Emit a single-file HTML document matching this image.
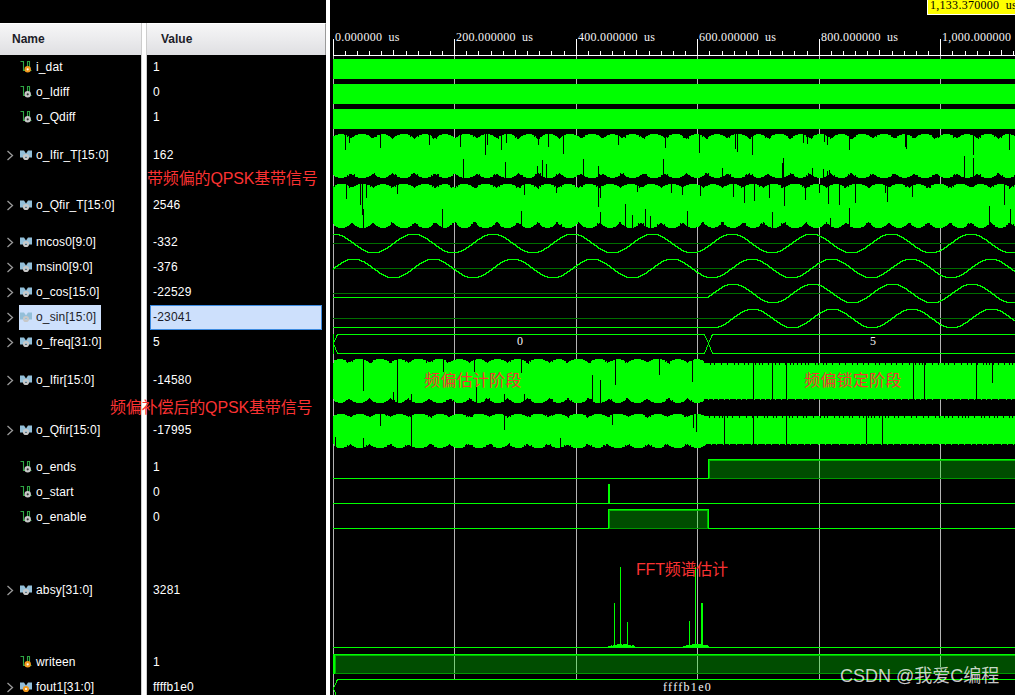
<!DOCTYPE html><html><head><meta charset="utf-8"><title>wave</title><style>
html,body{margin:0;padding:0;background:#000;}
body{width:1015px;height:695px;overflow:hidden;position:relative;font-family:"Liberation Sans","Noto Sans CJK SC",sans-serif;font-size:12px;color:#fff;}
.abs{position:absolute;}
.hdr{position:absolute;top:23px;height:32px;background:linear-gradient(#f6f6f7,#ececee 45%,#dfdfe2);box-sizing:border-box;border-top:1px solid #fff;color:#1c1c28;font-weight:bold;line-height:31px;}
.div{position:absolute;top:23px;bottom:0;background:#fff;}
.row{position:absolute;left:0;white-space:nowrap;}
.nm{position:absolute;left:36px;letter-spacing:0.14px;}
.val{position:absolute;left:153px;letter-spacing:0.2px;}
.red{position:absolute;color:#fa3232;font-size:16px;line-height:20px;letter-spacing:-0.15px;white-space:nowrap;font-family:"Liberation Sans","Noto Sans CJK SC",sans-serif;}
.mono{position:absolute;font-family:"Liberation Serif",serif;font-size:12px;line-height:12px;white-space:pre;word-spacing:3px;letter-spacing:0.28px;color:#f4f4f4;}
.ic{position:absolute;}
</style></head><body>
<svg width="1015" height="695" viewBox="0 0 1015 695" shape-rendering="crispEdges" style="position:absolute;left:0;top:0"><rect x="333" y="39" width="1" height="656" fill="#b4b4b4"/>
<rect x="454" y="39" width="1" height="640" fill="#b4b4b4"/>
<rect x="576" y="39" width="1" height="640" fill="#b4b4b4"/>
<rect x="697" y="39" width="1" height="640" fill="#b4b4b4"/>
<rect x="819" y="39" width="1" height="640" fill="#b4b4b4"/>
<rect x="940" y="39" width="1" height="628" fill="#b4b4b4"/>
<rect x="333" y="55" width="682" height="1" fill="#fff"/>
<rect x="333" y="39" width="1" height="17" fill="#fff"/>
<rect x="454" y="39" width="1" height="17" fill="#fff"/>
<rect x="576" y="39" width="1" height="17" fill="#fff"/>
<rect x="697" y="39" width="1" height="17" fill="#fff"/>
<rect x="819" y="39" width="1" height="17" fill="#fff"/>
<rect x="940" y="39" width="1" height="17" fill="#fff"/>
<rect x="345" y="51" width="1" height="5" fill="#fff"/>
<rect x="357" y="51" width="1" height="5" fill="#fff"/>
<rect x="369" y="51" width="1" height="5" fill="#fff"/>
<rect x="381" y="51" width="1" height="5" fill="#fff"/>
<rect x="393" y="50" width="1" height="6" fill="#fff"/>
<rect x="406" y="51" width="1" height="5" fill="#fff"/>
<rect x="418" y="51" width="1" height="5" fill="#fff"/>
<rect x="430" y="51" width="1" height="5" fill="#fff"/>
<rect x="442" y="51" width="1" height="5" fill="#fff"/>
<rect x="466" y="51" width="1" height="5" fill="#fff"/>
<rect x="478" y="51" width="1" height="5" fill="#fff"/>
<rect x="491" y="51" width="1" height="5" fill="#fff"/>
<rect x="503" y="51" width="1" height="5" fill="#fff"/>
<rect x="515" y="50" width="1" height="6" fill="#fff"/>
<rect x="527" y="51" width="1" height="5" fill="#fff"/>
<rect x="539" y="51" width="1" height="5" fill="#fff"/>
<rect x="551" y="51" width="1" height="5" fill="#fff"/>
<rect x="564" y="51" width="1" height="5" fill="#fff"/>
<rect x="588" y="51" width="1" height="5" fill="#fff"/>
<rect x="600" y="51" width="1" height="5" fill="#fff"/>
<rect x="612" y="51" width="1" height="5" fill="#fff"/>
<rect x="624" y="51" width="1" height="5" fill="#fff"/>
<rect x="636" y="50" width="1" height="6" fill="#fff"/>
<rect x="649" y="51" width="1" height="5" fill="#fff"/>
<rect x="661" y="51" width="1" height="5" fill="#fff"/>
<rect x="673" y="51" width="1" height="5" fill="#fff"/>
<rect x="685" y="51" width="1" height="5" fill="#fff"/>
<rect x="709" y="51" width="1" height="5" fill="#fff"/>
<rect x="722" y="51" width="1" height="5" fill="#fff"/>
<rect x="734" y="51" width="1" height="5" fill="#fff"/>
<rect x="746" y="51" width="1" height="5" fill="#fff"/>
<rect x="758" y="50" width="1" height="6" fill="#fff"/>
<rect x="770" y="51" width="1" height="5" fill="#fff"/>
<rect x="782" y="51" width="1" height="5" fill="#fff"/>
<rect x="794" y="51" width="1" height="5" fill="#fff"/>
<rect x="807" y="51" width="1" height="5" fill="#fff"/>
<rect x="831" y="51" width="1" height="5" fill="#fff"/>
<rect x="843" y="51" width="1" height="5" fill="#fff"/>
<rect x="855" y="51" width="1" height="5" fill="#fff"/>
<rect x="867" y="51" width="1" height="5" fill="#fff"/>
<rect x="879" y="50" width="1" height="6" fill="#fff"/>
<rect x="892" y="51" width="1" height="5" fill="#fff"/>
<rect x="904" y="51" width="1" height="5" fill="#fff"/>
<rect x="916" y="51" width="1" height="5" fill="#fff"/>
<rect x="928" y="51" width="1" height="5" fill="#fff"/>
<rect x="952" y="51" width="1" height="5" fill="#fff"/>
<rect x="965" y="51" width="1" height="5" fill="#fff"/>
<rect x="977" y="51" width="1" height="5" fill="#fff"/>
<rect x="989" y="51" width="1" height="5" fill="#fff"/>
<rect x="1001" y="50" width="1" height="6" fill="#fff"/>
<rect x="1013" y="51" width="1" height="5" fill="#fff"/>
<rect x="333" y="59" width="682" height="20" fill="#00ff00"/>
<rect x="333" y="84" width="682" height="20" fill="#00ff00"/>
<rect x="333" y="109" width="682" height="20" fill="#00ff00"/>
<path d="M333 136 L335 136 L335 135 L338 135 L338 134 L344 134 L344 135 L347 135 L347 137 L348 137 L348 136 L349 136 L349 137 L350 137 L350 138 L352 138 L352 137 L354 137 L354 136 L355 136 L355 135 L358 135 L358 134 L366 134 L366 135 L369 135 L369 136 L370 136 L370 137 L371 137 L371 138 L374 138 L374 137 L377 137 L377 135 L380 135 L380 134 L386 134 L386 135 L388 135 L388 136 L390 136 L390 137 L391 137 L391 138 L392 138 L392 139 L393 139 L393 138 L394 138 L394 137 L395 137 L395 136 L397 136 L397 135 L400 135 L400 134 L408 134 L408 135 L410 135 L410 137 L411 137 L411 136 L412 136 L412 137 L413 137 L413 138 L414 138 L414 139 L415 139 L415 138 L416 138 L416 137 L417 137 L417 136 L418 136 L418 137 L419 137 L419 135 L422 135 L422 134 L428 134 L428 135 L431 135 L431 136 L432 136 L432 138 L433 138 L433 139 L434 139 L434 138 L436 138 L436 139 L437 139 L437 137 L438 137 L438 136 L439 136 L439 135 L442 135 L442 134 L448 134 L448 135 L451 135 L451 136 L453 136 L453 137 L454 137 L454 138 L456 138 L456 137 L458 137 L458 136 L459 136 L459 135 L462 135 L462 134 L470 134 L470 135 L473 135 L473 137 L474 137 L474 136 L475 136 L475 137 L476 137 L476 138 L478 138 L478 137 L480 137 L480 136 L481 136 L481 135 L484 135 L484 134 L490 134 L490 135 L493 135 L493 136 L494 136 L494 137 L496 137 L496 138 L498 138 L498 139 L499 139 L499 136 L501 136 L501 135 L504 135 L504 134 L512 134 L512 135 L514 135 L514 136 L515 136 L515 138 L516 138 L516 137 L517 137 L517 139 L519 139 L519 138 L520 138 L520 137 L521 137 L521 136 L523 136 L523 135 L526 135 L526 134 L532 134 L532 135 L534 135 L534 137 L535 137 L535 136 L536 136 L536 138 L537 138 L537 139 L540 139 L540 137 L542 137 L542 136 L543 136 L543 135 L545 135 L545 134 L553 134 L553 135 L555 135 L555 136 L557 136 L557 137 L558 137 L558 138 L559 138 L559 139 L560 139 L560 138 L561 138 L561 137 L562 137 L562 136 L564 136 L564 135 L566 135 L566 134 L574 134 L574 135 L577 135 L577 136 L579 136 L579 137 L580 137 L580 138 L583 138 L583 137 L585 137 L585 135 L588 135 L588 134 L596 134 L596 135 L599 135 L599 136 L600 136 L600 137 L601 137 L601 138 L604 138 L604 137 L606 137 L606 136 L607 136 L607 135 L610 135 L610 134 L615 134 L615 135 L618 135 L618 136 L620 136 L620 137 L621 137 L621 138 L623 138 L623 137 L625 137 L625 138 L626 138 L626 135 L629 135 L629 134 L636 134 L636 135 L639 135 L639 137 L640 137 L640 136 L641 136 L641 137 L642 137 L642 138 L644 138 L644 139 L645 139 L645 137 L646 137 L646 136 L648 136 L648 135 L650 135 L650 134 L658 134 L658 135 L661 135 L661 136 L663 136 L663 137 L664 137 L664 138 L666 138 L666 137 L667 137 L667 138 L668 138 L668 137 L669 137 L669 135 L672 135 L672 134 L680 134 L680 135 L682 135 L682 136 L683 136 L683 138 L686 138 L686 139 L687 139 L687 138 L688 138 L688 139 L689 139 L689 136 L691 136 L691 135 L694 135 L694 134 L700 134 L700 135 L702 135 L702 137 L703 137 L703 136 L704 136 L704 137 L705 137 L705 138 L706 138 L706 139 L708 139 L708 137 L709 137 L709 136 L711 136 L711 135 L714 135 L714 134 L720 134 L720 135 L723 135 L723 136 L725 136 L725 137 L726 137 L726 138 L728 138 L728 137 L729 137 L729 138 L730 138 L730 136 L731 136 L731 135 L734 135 L734 134 L742 134 L742 135 L745 135 L745 136 L747 136 L747 137 L748 137 L748 138 L749 138 L749 139 L751 139 L751 137 L752 137 L752 136 L754 136 L754 135 L756 135 L756 134 L761 134 L761 135 L764 135 L764 136 L765 136 L765 138 L766 138 L766 137 L767 137 L767 138 L769 138 L769 139 L770 139 L770 138 L771 138 L771 136 L772 136 L772 135 L775 135 L775 134 L784 134 L784 135 L786 135 L786 136 L788 136 L788 138 L789 138 L789 139 L791 139 L791 138 L793 138 L793 136 L795 136 L795 135 L798 135 L798 134 L803 134 L803 135 L806 135 L806 137 L807 137 L807 136 L808 136 L808 137 L809 137 L809 138 L811 138 L811 139 L812 139 L812 138 L813 138 L813 136 L814 136 L814 135 L817 135 L817 134 L824 134 L824 135 L826 135 L826 136 L828 136 L828 137 L830 137 L830 139 L831 139 L831 138 L833 138 L833 137 L834 137 L834 136 L835 136 L835 135 L838 135 L838 134 L845 134 L845 135 L847 135 L847 136 L849 136 L849 137 L850 137 L850 139 L853 139 L853 138 L854 138 L854 137 L856 137 L856 135 L858 135 L858 134 L866 134 L866 135 L869 135 L869 136 L870 136 L870 137 L872 137 L872 138 L874 138 L874 137 L875 137 L875 136 L876 136 L876 137 L877 137 L877 135 L880 135 L880 134 L888 134 L888 135 L891 135 L891 137 L893 137 L893 138 L897 138 L897 136 L899 136 L899 135 L902 135 L902 134 L907 134 L907 135 L910 135 L910 136 L912 136 L912 138 L916 138 L916 137 L917 137 L917 136 L918 136 L918 135 L921 135 L921 134 L929 134 L929 135 L932 135 L932 137 L933 137 L933 138 L934 138 L934 139 L935 139 L935 138 L937 138 L937 137 L938 137 L938 138 L939 138 L939 137 L940 137 L940 135 L943 135 L943 134 L950 134 L950 135 L953 135 L953 138 L954 138 L954 137 L956 137 L956 138 L958 138 L958 137 L960 137 L960 136 L961 136 L961 135 L964 135 L964 134 L970 134 L970 135 L973 135 L973 136 L975 136 L975 137 L976 137 L976 138 L978 138 L978 139 L979 139 L979 137 L980 137 L980 138 L981 138 L981 135 L984 135 L984 134 L992 134 L992 135 L994 135 L994 137 L995 137 L995 136 L996 136 L996 137 L997 137 L997 138 L998 138 L998 139 L999 139 L999 138 L1000 138 L1000 137 L1001 137 L1001 138 L1002 138 L1002 136 L1003 136 L1003 135 L1005 135 L1005 134 L1011 134 L1011 135 L1014 135 L1014 136 L1016 136 L1016 176 L1015 176 L1015 175 L1014 175 L1014 177 L1011 177 L1011 178 L1005 178 L1005 177 L1003 177 L1003 175 L1002 175 L1002 176 L1001 176 L1001 175 L1000 175 L1000 174 L999 174 L999 173 L997 173 L997 175 L996 175 L996 176 L994 176 L994 177 L992 177 L992 178 L984 178 L984 177 L981 177 L981 174 L980 174 L980 175 L978 175 L978 174 L976 174 L976 175 L975 175 L975 176 L974 176 L974 175 L973 175 L973 177 L970 177 L970 178 L964 178 L964 177 L961 177 L961 176 L960 176 L960 175 L958 175 L958 174 L956 174 L956 175 L955 175 L955 174 L954 174 L954 175 L953 175 L953 177 L950 177 L950 178 L943 178 L943 177 L940 177 L940 176 L939 176 L939 175 L938 175 L938 174 L935 174 L935 175 L932 175 L932 177 L929 177 L929 178 L921 178 L921 177 L918 177 L918 175 L915 175 L915 174 L913 174 L913 175 L912 175 L912 176 L910 176 L910 177 L907 177 L907 178 L902 178 L902 177 L899 177 L899 176 L898 176 L898 175 L896 175 L896 174 L892 174 L892 176 L891 176 L891 177 L888 177 L888 178 L880 178 L880 177 L877 177 L877 176 L876 176 L876 175 L874 175 L874 174 L872 174 L872 175 L871 175 L871 174 L870 174 L870 176 L869 176 L869 177 L866 177 L866 178 L858 178 L858 177 L856 177 L856 175 L855 175 L855 176 L854 176 L854 175 L853 175 L853 174 L852 174 L852 173 L850 173 L850 175 L849 175 L849 174 L848 174 L848 176 L847 176 L847 177 L845 177 L845 178 L838 178 L838 177 L835 177 L835 175 L834 175 L834 176 L833 176 L833 175 L832 175 L832 174 L831 174 L831 173 L830 173 L830 175 L828 175 L828 176 L826 176 L826 177 L824 177 L824 178 L817 178 L817 177 L814 177 L814 176 L813 176 L813 174 L812 174 L812 175 L811 175 L811 174 L809 174 L809 173 L808 173 L808 176 L807 176 L807 175 L806 175 L806 177 L803 177 L803 178 L798 178 L798 177 L795 177 L795 176 L794 176 L794 174 L791 174 L791 173 L790 173 L790 175 L788 175 L788 176 L786 176 L786 177 L784 177 L784 178 L775 178 L775 177 L772 177 L772 176 L770 176 L770 175 L769 175 L769 174 L767 174 L767 175 L765 175 L765 176 L764 176 L764 177 L761 177 L761 178 L756 178 L756 177 L754 177 L754 176 L753 176 L753 174 L752 174 L752 175 L750 175 L750 173 L749 173 L749 174 L748 174 L748 175 L747 175 L747 174 L746 174 L746 175 L745 175 L745 177 L742 177 L742 178 L734 178 L734 177 L731 177 L731 174 L730 174 L730 175 L729 175 L729 174 L726 174 L726 175 L725 175 L725 176 L723 176 L723 177 L720 177 L720 178 L714 178 L714 177 L711 177 L711 176 L709 176 L709 173 L708 173 L708 174 L707 174 L707 173 L705 173 L705 175 L704 175 L704 176 L702 176 L702 177 L700 177 L700 178 L694 178 L694 177 L691 177 L691 176 L690 176 L690 175 L688 175 L688 174 L687 174 L687 173 L686 173 L686 174 L685 174 L685 175 L684 175 L684 176 L682 176 L682 177 L680 177 L680 178 L672 178 L672 177 L669 177 L669 176 L668 176 L668 174 L667 174 L667 175 L666 175 L666 174 L664 174 L664 175 L661 175 L661 177 L658 177 L658 178 L650 178 L650 177 L648 177 L648 176 L647 176 L647 174 L642 174 L642 175 L640 175 L640 176 L639 176 L639 177 L636 177 L636 178 L629 178 L629 177 L626 177 L626 176 L625 176 L625 175 L624 175 L624 173 L623 173 L623 174 L621 174 L621 173 L620 173 L620 176 L618 176 L618 177 L615 177 L615 178 L610 178 L610 177 L607 177 L607 176 L606 176 L606 175 L604 175 L604 174 L602 174 L602 175 L600 175 L600 174 L599 174 L599 177 L596 177 L596 178 L588 178 L588 177 L585 177 L585 176 L584 176 L584 175 L582 175 L582 174 L580 174 L580 175 L577 175 L577 177 L574 177 L574 178 L566 178 L566 177 L564 177 L564 176 L563 176 L563 175 L561 175 L561 174 L560 174 L560 173 L559 173 L559 174 L558 174 L558 175 L557 175 L557 174 L556 174 L556 176 L555 176 L555 177 L553 177 L553 178 L545 178 L545 177 L543 177 L543 176 L541 176 L541 173 L540 173 L540 174 L539 174 L539 173 L537 173 L537 174 L535 174 L535 176 L534 176 L534 177 L532 177 L532 178 L526 178 L526 177 L523 177 L523 175 L520 175 L520 174 L519 174 L519 173 L518 173 L518 174 L517 174 L517 175 L516 175 L516 176 L514 176 L514 177 L512 177 L512 178 L504 178 L504 177 L501 177 L501 176 L499 176 L499 175 L498 175 L498 174 L496 174 L496 175 L495 175 L495 174 L494 174 L494 175 L493 175 L493 177 L490 177 L490 178 L484 178 L484 177 L481 177 L481 176 L480 176 L480 174 L479 174 L479 175 L478 175 L478 174 L476 174 L476 175 L475 175 L475 176 L473 176 L473 177 L470 177 L470 178 L462 178 L462 177 L459 177 L459 176 L458 176 L458 175 L456 175 L456 174 L453 174 L453 176 L451 176 L451 177 L448 177 L448 178 L442 178 L442 177 L439 177 L439 174 L437 174 L437 175 L436 175 L436 174 L433 174 L433 176 L432 176 L432 175 L431 175 L431 177 L428 177 L428 178 L422 178 L422 177 L419 177 L419 176 L418 176 L418 174 L417 174 L417 175 L416 175 L416 174 L415 174 L415 173 L413 173 L413 174 L411 174 L411 176 L410 176 L410 177 L408 177 L408 178 L400 178 L400 177 L397 177 L397 175 L396 175 L396 174 L395 174 L395 175 L394 175 L394 174 L393 174 L393 173 L392 173 L392 174 L391 174 L391 175 L389 175 L389 176 L388 176 L388 177 L386 177 L386 178 L380 178 L380 177 L377 177 L377 176 L376 176 L376 175 L375 175 L375 173 L374 173 L374 174 L372 174 L372 175 L371 175 L371 176 L369 176 L369 177 L366 177 L366 178 L358 178 L358 177 L355 177 L355 174 L354 174 L354 175 L352 175 L352 174 L349 174 L349 176 L348 176 L348 175 L347 175 L347 177 L344 177 L344 178 L338 178 L338 177 L335 177 L335 176 L334 176 L334 175 L333 175Z" fill="#00ff00"/>
<rect x="345" y="134" width="1" height="16" fill="#000"/><rect x="349" y="134" width="1" height="9" fill="#000"/><rect x="380" y="134" width="1" height="14" fill="#000"/><rect x="429" y="134" width="1" height="11" fill="#000"/><rect x="460" y="134" width="1" height="13" fill="#000"/><rect x="485" y="134" width="1" height="21" fill="#000"/><rect x="487" y="134" width="1" height="11" fill="#000"/><rect x="501" y="134" width="1" height="16" fill="#000"/><rect x="506" y="134" width="1" height="9" fill="#000"/><rect x="538" y="134" width="1" height="11" fill="#000"/><rect x="548" y="134" width="1" height="13" fill="#000"/><rect x="563" y="134" width="1" height="20" fill="#000"/><rect x="618" y="134" width="1" height="11" fill="#000"/><rect x="665" y="134" width="1" height="14" fill="#000"/><rect x="905" y="134" width="1" height="13" fill="#000"/><rect x="737" y="134" width="1" height="18" fill="#000"/><rect x="973" y="134" width="1" height="21" fill="#000"/><rect x="699" y="134" width="1" height="19" fill="#000"/><rect x="1009" y="134" width="1" height="16" fill="#000"/><rect x="807" y="134" width="1" height="10" fill="#000"/><rect x="906" y="134" width="1" height="15" fill="#000"/><rect x="735" y="134" width="1" height="15" fill="#000"/><rect x="803" y="134" width="1" height="9" fill="#000"/><rect x="752" y="134" width="1" height="21" fill="#000"/><rect x="827" y="134" width="1" height="11" fill="#000"/><rect x="824" y="134" width="1" height="8" fill="#000"/><rect x="849" y="134" width="1" height="16" fill="#000"/><rect x="463" y="159" width="1" height="19" fill="#000"/><rect x="505" y="162" width="1" height="16" fill="#000"/><rect x="537" y="166" width="1" height="12" fill="#000"/><rect x="542" y="160" width="1" height="18" fill="#000"/><rect x="546" y="164" width="1" height="14" fill="#000"/><rect x="583" y="159" width="1" height="19" fill="#000"/><rect x="598" y="166" width="1" height="12" fill="#000"/><rect x="663" y="159" width="1" height="19" fill="#000"/><rect x="722" y="168" width="1" height="10" fill="#000"/><rect x="829" y="170" width="1" height="8" fill="#000"/><rect x="782" y="163" width="1" height="15" fill="#000"/><rect x="964" y="156" width="1" height="22" fill="#000"/><rect x="783" y="158" width="1" height="20" fill="#000"/><rect x="827" y="171" width="1" height="7" fill="#000"/><rect x="823" y="169" width="1" height="9" fill="#000"/><rect x="973" y="158" width="1" height="20" fill="#000"/><rect x="812" y="168" width="1" height="10" fill="#000"/>
<path d="M333 186 L334 186 L334 187 L335 187 L335 185 L337 185 L337 184 L346 184 L346 185 L348 185 L348 186 L349 186 L349 188 L350 188 L350 187 L354 187 L354 186 L356 186 L356 185 L358 185 L358 184 L367 184 L367 185 L370 185 L370 187 L371 187 L371 186 L372 186 L372 187 L373 187 L373 188 L374 188 L374 187 L375 187 L375 186 L377 186 L377 185 L380 185 L380 184 L386 184 L386 185 L389 185 L389 186 L391 186 L391 188 L392 188 L392 187 L394 187 L394 186 L395 186 L395 187 L396 187 L396 185 L399 185 L399 184 L408 184 L408 185 L411 185 L411 186 L413 186 L413 187 L414 187 L414 188 L415 188 L415 187 L416 187 L416 186 L418 186 L418 185 L421 185 L421 184 L429 184 L429 185 L432 185 L432 187 L433 187 L433 186 L434 186 L434 188 L436 188 L436 187 L437 187 L437 186 L438 186 L438 187 L439 187 L439 185 L442 185 L442 184 L448 184 L448 185 L450 185 L450 187 L451 187 L451 188 L452 188 L452 187 L455 187 L455 188 L456 188 L456 186 L457 186 L457 187 L458 187 L458 185 L460 185 L460 184 L468 184 L468 185 L471 185 L471 186 L472 186 L472 187 L474 187 L474 188 L477 188 L477 187 L478 187 L478 185 L481 185 L481 184 L490 184 L490 185 L493 185 L493 187 L494 187 L494 186 L495 186 L495 187 L496 187 L496 188 L497 188 L497 187 L498 187 L498 186 L499 186 L499 187 L500 187 L500 185 L503 185 L503 184 L512 184 L512 185 L515 185 L515 186 L516 186 L516 188 L517 188 L517 187 L519 187 L519 188 L521 188 L521 186 L522 186 L522 185 L525 185 L525 184 L531 184 L531 185 L534 185 L534 187 L535 187 L535 186 L536 186 L536 187 L537 187 L537 188 L538 188 L538 189 L539 189 L539 186 L540 186 L540 187 L541 187 L541 185 L544 185 L544 184 L551 184 L551 185 L554 185 L554 187 L555 187 L555 186 L556 186 L556 188 L558 188 L558 187 L560 187 L560 186 L561 186 L561 187 L562 187 L562 185 L564 185 L564 184 L572 184 L572 185 L575 185 L575 187 L578 187 L578 188 L579 188 L579 187 L580 187 L580 186 L581 186 L581 187 L583 187 L583 185 L585 185 L585 184 L593 184 L593 185 L596 185 L596 187 L597 187 L597 186 L598 186 L598 188 L600 188 L600 187 L601 187 L601 186 L604 186 L604 185 L606 185 L606 184 L614 184 L614 185 L617 185 L617 186 L619 186 L619 187 L620 187 L620 188 L621 188 L621 187 L622 187 L622 186 L624 186 L624 185 L627 185 L627 184 L635 184 L635 185 L637 185 L637 187 L638 187 L638 186 L639 186 L639 188 L640 188 L640 187 L644 187 L644 186 L645 186 L645 185 L647 185 L647 184 L655 184 L655 185 L658 185 L658 186 L660 186 L660 187 L661 187 L661 188 L662 188 L662 187 L663 187 L663 186 L665 186 L665 185 L668 185 L668 184 L676 184 L676 185 L679 185 L679 186 L681 186 L681 187 L682 187 L682 188 L683 188 L683 187 L684 187 L684 186 L686 186 L686 185 L689 185 L689 184 L697 184 L697 185 L700 185 L700 186 L702 186 L702 187 L703 187 L703 188 L704 188 L704 187 L705 187 L705 186 L708 186 L708 185 L710 185 L710 184 L716 184 L716 185 L719 185 L719 186 L721 186 L721 187 L722 187 L722 188 L723 188 L723 187 L724 187 L724 186 L727 186 L727 185 L729 185 L729 184 L737 184 L737 185 L739 185 L739 186 L741 186 L741 188 L742 188 L742 187 L744 187 L744 188 L745 188 L745 186 L746 186 L746 185 L749 185 L749 184 L757 184 L757 185 L759 185 L759 187 L760 187 L760 186 L762 186 L762 187 L763 187 L763 188 L764 188 L764 187 L765 187 L765 186 L767 186 L767 185 L770 185 L770 184 L778 184 L778 185 L781 185 L781 188 L783 188 L783 187 L786 187 L786 186 L788 186 L788 185 L790 185 L790 184 L800 184 L800 185 L802 185 L802 187 L803 187 L803 186 L804 186 L804 188 L805 188 L805 187 L806 187 L806 188 L807 188 L807 187 L810 187 L810 185 L813 185 L813 184 L820 184 L820 185 L823 185 L823 186 L825 186 L825 187 L826 187 L826 188 L827 188 L827 187 L828 187 L828 186 L830 186 L830 185 L833 185 L833 184 L839 184 L839 185 L842 185 L842 186 L844 186 L844 188 L846 188 L846 187 L847 187 L847 186 L848 186 L848 187 L849 187 L849 185 L852 185 L852 184 L862 184 L862 185 L865 185 L865 186 L867 186 L867 187 L868 187 L868 188 L870 188 L870 187 L871 187 L871 186 L872 186 L872 185 L875 185 L875 184 L883 184 L883 185 L885 185 L885 186 L887 186 L887 188 L888 188 L888 187 L891 187 L891 186 L892 186 L892 185 L895 185 L895 184 L903 184 L903 185 L905 185 L905 187 L907 187 L907 186 L908 186 L908 187 L909 187 L909 188 L910 188 L910 187 L911 187 L911 186 L913 186 L913 185 L916 185 L916 184 L921 184 L921 185 L924 185 L924 186 L926 186 L926 188 L928 188 L928 187 L929 187 L929 188 L931 188 L931 185 L934 185 L934 184 L944 184 L944 185 L946 185 L946 186 L948 186 L948 188 L949 188 L949 187 L951 187 L951 188 L952 188 L952 186 L953 186 L953 187 L954 187 L954 185 L956 185 L956 184 L965 184 L965 185 L967 185 L967 186 L969 186 L969 187 L974 187 L974 186 L975 186 L975 185 L977 185 L977 184 L984 184 L984 185 L987 185 L987 186 L988 186 L988 187 L990 187 L990 188 L991 188 L991 187 L992 187 L992 186 L993 186 L993 187 L994 187 L994 185 L997 185 L997 184 L1004 184 L1004 185 L1007 185 L1007 186 L1009 186 L1009 189 L1010 189 L1010 188 L1011 188 L1011 187 L1012 187 L1012 186 L1013 186 L1013 187 L1014 187 L1014 185 L1016 185 L1016 227 L1015 227 L1015 226 L1014 226 L1014 224 L1013 224 L1013 225 L1012 225 L1012 224 L1011 224 L1011 222 L1010 222 L1010 223 L1008 223 L1008 225 L1006 225 L1006 227 L1003 227 L1003 228 L998 228 L998 227 L995 227 L995 225 L993 225 L993 224 L992 224 L992 223 L991 223 L991 222 L990 222 L990 223 L989 223 L989 225 L987 225 L987 226 L986 226 L986 227 L984 227 L984 228 L978 228 L978 227 L976 227 L976 226 L974 226 L974 224 L972 224 L972 223 L970 223 L970 224 L969 224 L969 223 L968 223 L968 224 L967 224 L967 226 L966 226 L966 227 L964 227 L964 228 L957 228 L957 227 L955 227 L955 226 L953 226 L953 225 L952 225 L952 223 L949 223 L949 224 L948 224 L948 225 L947 225 L947 226 L945 226 L945 227 L943 227 L943 228 L935 228 L935 227 L933 227 L933 226 L932 226 L932 225 L930 225 L930 223 L927 223 L927 224 L925 224 L925 226 L923 226 L923 227 L921 227 L921 228 L916 228 L916 227 L914 227 L914 226 L912 226 L912 225 L911 225 L911 223 L908 223 L908 224 L907 224 L907 225 L906 225 L906 226 L904 226 L904 227 L902 227 L902 228 L896 228 L896 227 L894 227 L894 226 L892 226 L892 225 L891 225 L891 224 L890 224 L890 223 L888 223 L888 224 L887 224 L887 225 L886 225 L886 226 L884 226 L884 227 L882 227 L882 228 L875 228 L875 227 L873 227 L873 226 L872 226 L872 225 L871 225 L871 223 L869 223 L869 222 L868 222 L868 223 L866 223 L866 225 L865 225 L865 226 L864 226 L864 227 L861 227 L861 228 L853 228 L853 227 L850 227 L850 226 L849 226 L849 224 L847 224 L847 223 L845 223 L845 224 L844 224 L844 225 L842 225 L842 226 L841 226 L841 227 L839 227 L839 228 L834 228 L834 227 L831 227 L831 226 L830 226 L830 225 L829 225 L829 224 L827 224 L827 222 L826 222 L826 224 L824 224 L824 225 L823 225 L823 226 L822 226 L822 227 L819 227 L819 228 L813 228 L813 227 L811 227 L811 226 L809 226 L809 225 L808 225 L808 224 L807 224 L807 222 L806 222 L806 223 L805 223 L805 224 L804 224 L804 225 L803 225 L803 226 L802 226 L802 227 L799 227 L799 228 L791 228 L791 227 L789 227 L789 226 L788 226 L788 225 L786 225 L786 222 L785 222 L785 223 L783 223 L783 224 L782 224 L782 223 L781 223 L781 226 L779 226 L779 227 L777 227 L777 228 L771 228 L771 227 L768 227 L768 226 L767 226 L767 225 L765 225 L765 223 L764 223 L764 222 L763 222 L763 224 L762 224 L762 223 L761 223 L761 224 L760 224 L760 226 L759 226 L759 227 L756 227 L756 228 L750 228 L750 227 L748 227 L748 226 L746 226 L746 223 L742 223 L742 224 L741 224 L741 225 L740 225 L740 226 L738 226 L738 227 L736 227 L736 228 L730 228 L730 227 L727 227 L727 226 L726 226 L726 225 L724 225 L724 222 L721 222 L721 225 L719 225 L719 226 L718 226 L718 227 L715 227 L715 228 L711 228 L711 227 L708 227 L708 226 L707 226 L707 225 L705 225 L705 224 L704 224 L704 222 L702 222 L702 223 L701 223 L701 225 L700 225 L700 226 L699 226 L699 227 L696 227 L696 228 L690 228 L690 227 L687 227 L687 226 L686 226 L686 225 L685 225 L685 224 L684 224 L684 223 L682 223 L682 224 L681 224 L681 223 L680 223 L680 226 L678 226 L678 227 L676 227 L676 228 L668 228 L668 227 L666 227 L666 226 L665 226 L665 224 L664 224 L664 225 L663 225 L663 224 L662 224 L662 223 L660 223 L660 224 L659 224 L659 225 L658 225 L658 224 L657 224 L657 227 L654 227 L654 228 L648 228 L648 227 L646 227 L646 226 L644 226 L644 223 L643 223 L643 224 L642 224 L642 223 L640 223 L640 224 L639 224 L639 223 L638 223 L638 226 L636 226 L636 227 L634 227 L634 228 L627 228 L627 227 L625 227 L625 226 L624 226 L624 225 L622 225 L622 224 L621 224 L621 222 L619 222 L619 224 L618 224 L618 225 L617 225 L617 226 L616 226 L616 227 L613 227 L613 228 L607 228 L607 227 L605 227 L605 226 L603 226 L603 225 L602 225 L602 224 L601 224 L601 223 L599 223 L599 224 L598 224 L598 223 L597 223 L597 226 L595 226 L595 227 L593 227 L593 228 L586 228 L586 227 L583 227 L583 226 L582 226 L582 225 L581 225 L581 224 L580 224 L580 223 L579 223 L579 222 L578 222 L578 224 L576 224 L576 226 L574 226 L574 227 L572 227 L572 228 L565 228 L565 227 L562 227 L562 224 L561 224 L561 225 L559 225 L559 224 L558 224 L558 222 L556 222 L556 224 L555 224 L555 225 L554 225 L554 226 L553 226 L553 227 L550 227 L550 228 L545 228 L545 227 L542 227 L542 226 L541 226 L541 225 L540 225 L540 223 L538 223 L538 222 L537 222 L537 224 L536 224 L536 225 L534 225 L534 226 L533 226 L533 227 L531 227 L531 228 L525 228 L525 227 L523 227 L523 226 L522 226 L522 224 L519 224 L519 223 L516 223 L516 225 L515 225 L515 226 L513 226 L513 227 L511 227 L511 228 L504 228 L504 227 L501 227 L501 226 L500 226 L500 224 L499 224 L499 223 L498 223 L498 222 L496 222 L496 223 L495 223 L495 225 L493 225 L493 226 L492 226 L492 227 L489 227 L489 228 L482 228 L482 227 L479 227 L479 226 L478 226 L478 225 L477 225 L477 223 L476 223 L476 222 L473 222 L473 224 L471 224 L471 226 L470 226 L470 227 L468 227 L468 228 L461 228 L461 227 L459 227 L459 226 L458 226 L458 225 L457 225 L457 223 L456 223 L456 222 L455 222 L455 223 L452 223 L452 225 L450 225 L450 226 L449 226 L449 227 L447 227 L447 228 L443 228 L443 227 L441 227 L441 226 L439 226 L439 225 L438 225 L438 224 L437 224 L437 223 L433 223 L433 225 L432 225 L432 226 L431 226 L431 227 L429 227 L429 228 L422 228 L422 227 L419 227 L419 226 L418 226 L418 224 L416 224 L416 223 L414 223 L414 224 L412 224 L412 226 L410 226 L410 227 L408 227 L408 228 L400 228 L400 227 L398 227 L398 226 L396 226 L396 225 L395 225 L395 224 L394 224 L394 223 L392 223 L392 222 L391 222 L391 225 L390 225 L390 226 L388 226 L388 227 L386 227 L386 228 L380 228 L380 227 L378 227 L378 226 L376 226 L376 225 L375 225 L375 224 L374 224 L374 223 L372 223 L372 224 L371 224 L371 225 L370 225 L370 226 L368 226 L368 227 L366 227 L366 228 L359 228 L359 227 L357 227 L357 226 L355 226 L355 225 L354 225 L354 224 L353 224 L353 223 L351 223 L351 224 L350 224 L350 225 L349 225 L349 226 L347 226 L347 227 L345 227 L345 228 L338 228 L338 227 L336 227 L336 226 L334 226 L334 224 L333 224Z" fill="#00ff00"/>
<rect x="346" y="184" width="1" height="15" fill="#000"/><rect x="360" y="184" width="1" height="21" fill="#000"/><rect x="362" y="184" width="1" height="31" fill="#000"/><rect x="366" y="184" width="1" height="14" fill="#000"/><rect x="397" y="184" width="1" height="10" fill="#000"/><rect x="524" y="184" width="1" height="11" fill="#000"/><rect x="556" y="184" width="1" height="9" fill="#000"/><rect x="598" y="184" width="1" height="23" fill="#000"/><rect x="600" y="184" width="1" height="14" fill="#000"/><rect x="637" y="184" width="1" height="8" fill="#000"/><rect x="885" y="184" width="1" height="9" fill="#000"/><rect x="887" y="184" width="1" height="18" fill="#000"/><rect x="855" y="184" width="1" height="19" fill="#000"/><rect x="819" y="184" width="1" height="9" fill="#000"/><rect x="769" y="184" width="1" height="14" fill="#000"/><rect x="805" y="184" width="1" height="16" fill="#000"/><rect x="784" y="184" width="1" height="22" fill="#000"/><rect x="744" y="184" width="1" height="19" fill="#000"/><rect x="682" y="184" width="1" height="11" fill="#000"/><rect x="700" y="184" width="1" height="12" fill="#000"/><rect x="754" y="184" width="1" height="17" fill="#000"/><rect x="1004" y="184" width="1" height="21" fill="#000"/><rect x="839" y="184" width="1" height="21" fill="#000"/><rect x="671" y="184" width="1" height="9" fill="#000"/><rect x="733" y="184" width="1" height="13" fill="#000"/><rect x="828" y="184" width="1" height="20" fill="#000"/><rect x="912" y="184" width="1" height="13" fill="#000"/><rect x="363" y="209" width="1" height="19" fill="#000"/><rect x="442" y="209" width="1" height="19" fill="#000"/><rect x="521" y="211" width="1" height="17" fill="#000"/><rect x="600" y="212" width="1" height="16" fill="#000"/><rect x="625" y="204" width="1" height="24" fill="#000"/><rect x="632" y="215" width="1" height="13" fill="#000"/><rect x="645" y="209" width="1" height="19" fill="#000"/><rect x="650" y="216" width="1" height="12" fill="#000"/><rect x="687" y="211" width="1" height="17" fill="#000"/><rect x="772" y="212" width="1" height="16" fill="#000"/><rect x="989" y="206" width="1" height="22" fill="#000"/><rect x="1010" y="220" width="1" height="8" fill="#000"/><rect x="830" y="218" width="1" height="10" fill="#000"/><rect x="1010" y="209" width="1" height="19" fill="#000"/><rect x="849" y="208" width="1" height="20" fill="#000"/>
<path d="M333 363 L334 363 L334 360 L337 360 L337 359 L343 359 L343 360 L346 360 L346 362 L347 362 L347 363 L348 363 L348 362 L351 362 L351 361 L352 361 L352 362 L353 362 L353 360 L355 360 L355 359 L363 359 L363 360 L366 360 L366 361 L368 361 L368 362 L369 362 L369 363 L372 363 L372 362 L373 362 L373 360 L376 360 L376 359 L384 359 L384 360 L387 360 L387 361 L389 361 L389 363 L392 363 L392 361 L394 361 L394 360 L397 360 L397 359 L402 359 L402 360 L405 360 L405 362 L406 362 L406 361 L407 361 L407 362 L408 362 L408 363 L409 363 L409 362 L411 362 L411 361 L412 361 L412 360 L414 360 L414 359 L423 359 L423 360 L426 360 L426 363 L427 363 L427 361 L428 361 L428 362 L431 362 L431 361 L432 361 L432 362 L433 362 L433 360 L435 360 L435 359 L444 359 L444 360 L446 360 L446 362 L447 362 L447 363 L448 363 L448 362 L451 362 L451 361 L453 361 L453 360 L456 360 L456 359 L463 359 L463 360 L466 360 L466 361 L468 361 L468 362 L469 362 L469 363 L470 363 L470 362 L471 362 L471 361 L473 361 L473 360 L476 360 L476 359 L482 359 L482 360 L484 360 L484 361 L485 361 L485 362 L487 362 L487 363 L488 363 L488 362 L489 362 L489 361 L491 361 L491 360 L494 360 L494 359 L501 359 L501 360 L504 360 L504 361 L506 361 L506 362 L507 362 L507 363 L508 363 L508 362 L509 362 L509 361 L510 361 L510 362 L511 362 L511 360 L514 360 L514 359 L521 359 L521 360 L524 360 L524 361 L526 361 L526 363 L528 363 L528 364 L529 364 L529 361 L530 361 L530 362 L531 362 L531 360 L534 360 L534 359 L543 359 L543 360 L545 360 L545 361 L548 361 L548 362 L549 362 L549 363 L550 363 L550 362 L551 362 L551 361 L552 361 L552 362 L553 362 L553 360 L556 360 L556 359 L562 359 L562 360 L564 360 L564 361 L566 361 L566 363 L568 363 L568 362 L569 362 L569 361 L571 361 L571 360 L574 360 L574 359 L583 359 L583 360 L585 360 L585 361 L587 361 L587 362 L588 362 L588 363 L591 363 L591 361 L592 361 L592 360 L595 360 L595 359 L603 359 L603 360 L605 360 L605 362 L606 362 L606 361 L607 361 L607 363 L608 363 L608 362 L610 362 L610 361 L613 361 L613 360 L615 360 L615 359 L621 359 L621 360 L624 360 L624 361 L625 361 L625 363 L626 363 L626 362 L627 362 L627 363 L628 363 L628 362 L629 362 L629 361 L631 361 L631 360 L634 360 L634 359 L641 359 L641 360 L644 360 L644 361 L646 361 L646 362 L649 362 L649 361 L651 361 L651 360 L653 360 L653 359 L662 359 L662 360 L665 360 L665 362 L666 362 L666 361 L667 361 L667 363 L669 363 L669 364 L670 364 L670 361 L672 361 L672 360 L675 360 L675 359 L681 359 L681 360 L684 360 L684 361 L686 361 L686 362 L687 362 L687 363 L688 363 L688 362 L689 362 L689 361 L692 361 L692 360 L694 360 L694 359 L700 359 L700 360 L703 360 L703 361 L704 361 L704 363 L706 363 L706 399 L704 399 L704 401 L703 401 L703 402 L700 402 L700 403 L694 403 L694 402 L692 402 L692 400 L691 400 L691 401 L690 401 L690 400 L689 400 L689 399 L688 399 L688 398 L687 398 L687 399 L686 399 L686 400 L685 400 L685 401 L684 401 L684 402 L681 402 L681 403 L675 403 L675 402 L673 402 L673 400 L672 400 L672 401 L671 401 L671 400 L670 400 L670 398 L668 398 L668 399 L666 399 L666 401 L665 401 L665 402 L662 402 L662 403 L654 403 L654 402 L651 402 L651 401 L650 401 L650 400 L648 400 L648 399 L646 399 L646 400 L644 400 L644 401 L643 401 L643 402 L641 402 L641 403 L634 403 L634 402 L631 402 L631 401 L630 401 L630 400 L629 400 L629 399 L628 399 L628 398 L626 398 L626 400 L625 400 L625 401 L623 401 L623 402 L621 402 L621 403 L615 403 L615 402 L613 402 L613 401 L612 401 L612 399 L611 399 L611 400 L610 400 L610 399 L608 399 L608 400 L607 400 L607 401 L605 401 L605 402 L602 402 L602 403 L595 403 L595 402 L593 402 L593 401 L592 401 L592 399 L589 399 L589 398 L587 398 L587 400 L586 400 L586 401 L585 401 L585 402 L582 402 L582 403 L574 403 L574 402 L572 402 L572 400 L571 400 L571 401 L570 401 L570 400 L569 400 L569 398 L567 398 L567 400 L565 400 L565 401 L564 401 L564 402 L561 402 L561 403 L556 403 L556 402 L553 402 L553 399 L550 399 L550 398 L549 398 L549 399 L548 399 L548 400 L547 400 L547 401 L545 401 L545 402 L543 402 L543 403 L534 403 L534 402 L532 402 L532 401 L531 401 L531 399 L528 399 L528 398 L527 398 L527 399 L526 399 L526 400 L524 400 L524 401 L523 401 L523 402 L521 402 L521 403 L514 403 L514 402 L512 402 L512 401 L511 401 L511 400 L509 400 L509 399 L508 399 L508 398 L507 398 L507 399 L506 399 L506 400 L505 400 L505 401 L504 401 L504 402 L501 402 L501 403 L494 403 L494 402 L492 402 L492 401 L490 401 L490 398 L489 398 L489 399 L487 399 L487 398 L486 398 L486 399 L485 399 L485 401 L484 401 L484 402 L481 402 L481 403 L476 403 L476 402 L474 402 L474 401 L472 401 L472 399 L470 399 L470 398 L469 398 L469 400 L467 400 L467 401 L466 401 L466 402 L463 402 L463 403 L456 403 L456 402 L454 402 L454 400 L453 400 L453 401 L452 401 L452 399 L449 399 L449 400 L446 400 L446 402 L443 402 L443 403 L436 403 L436 402 L433 402 L433 401 L432 401 L432 400 L430 400 L430 399 L428 399 L428 400 L427 400 L427 401 L425 401 L425 402 L423 402 L423 403 L415 403 L415 402 L412 402 L412 401 L411 401 L411 400 L409 400 L409 398 L408 398 L408 399 L407 399 L407 400 L405 400 L405 401 L404 401 L404 402 L402 402 L402 403 L397 403 L397 402 L395 402 L395 400 L394 400 L394 401 L393 401 L393 400 L392 400 L392 399 L391 399 L391 398 L390 398 L390 399 L389 399 L389 400 L388 400 L388 401 L386 401 L386 402 L384 402 L384 403 L376 403 L376 402 L373 402 L373 401 L372 401 L372 400 L371 400 L371 399 L370 399 L370 398 L369 398 L369 399 L368 399 L368 400 L367 400 L367 401 L365 401 L365 402 L363 402 L363 403 L356 403 L356 402 L353 402 L353 401 L352 401 L352 400 L350 400 L350 399 L348 399 L348 400 L346 400 L346 401 L345 401 L345 402 L343 402 L343 403 L338 403 L338 402 L335 402 L335 401 L334 401 L334 399 L333 399Z" fill="#00ff00"/>
<rect x="706" y="363" width="309" height="36" fill="#00ff00"/>
<rect x="710" y="363" width="1" height="2" fill="#000"/><rect x="714" y="363" width="1" height="2" fill="#000"/><rect x="721" y="363" width="1" height="2" fill="#000"/><rect x="727" y="363" width="1" height="2" fill="#000"/><rect x="734" y="363" width="1" height="2" fill="#000"/><rect x="738" y="363" width="1" height="2" fill="#000"/><rect x="744" y="363" width="1" height="2" fill="#000"/><rect x="748" y="363" width="1" height="2" fill="#000"/><rect x="755" y="363" width="1" height="2" fill="#000"/><rect x="759" y="363" width="1" height="2" fill="#000"/><rect x="762" y="363" width="1" height="2" fill="#000"/><rect x="768" y="363" width="1" height="2" fill="#000"/><rect x="775" y="363" width="1" height="2" fill="#000"/><rect x="779" y="363" width="1" height="2" fill="#000"/><rect x="785" y="363" width="1" height="2" fill="#000"/><rect x="790" y="363" width="1" height="2" fill="#000"/><rect x="793" y="363" width="1" height="2" fill="#000"/><rect x="797" y="363" width="1" height="2" fill="#000"/><rect x="801" y="363" width="1" height="2" fill="#000"/><rect x="805" y="363" width="1" height="2" fill="#000"/><rect x="808" y="363" width="1" height="2" fill="#000"/><rect x="815" y="363" width="1" height="2" fill="#000"/><rect x="818" y="363" width="1" height="2" fill="#000"/><rect x="823" y="363" width="1" height="2" fill="#000"/><rect x="826" y="363" width="1" height="2" fill="#000"/><rect x="832" y="363" width="1" height="2" fill="#000"/><rect x="839" y="363" width="1" height="2" fill="#000"/><rect x="845" y="363" width="1" height="2" fill="#000"/><rect x="852" y="363" width="1" height="2" fill="#000"/><rect x="857" y="363" width="1" height="2" fill="#000"/><rect x="863" y="363" width="1" height="2" fill="#000"/><rect x="868" y="363" width="1" height="2" fill="#000"/><rect x="875" y="363" width="1" height="2" fill="#000"/><rect x="879" y="363" width="1" height="2" fill="#000"/><rect x="885" y="363" width="1" height="2" fill="#000"/><rect x="891" y="363" width="1" height="2" fill="#000"/><rect x="896" y="363" width="1" height="2" fill="#000"/><rect x="902" y="363" width="1" height="2" fill="#000"/><rect x="909" y="363" width="1" height="2" fill="#000"/><rect x="915" y="363" width="1" height="2" fill="#000"/><rect x="919" y="363" width="1" height="2" fill="#000"/><rect x="922" y="363" width="1" height="2" fill="#000"/><rect x="925" y="363" width="1" height="2" fill="#000"/><rect x="932" y="363" width="1" height="2" fill="#000"/><rect x="938" y="363" width="1" height="2" fill="#000"/><rect x="944" y="363" width="1" height="2" fill="#000"/><rect x="948" y="363" width="1" height="2" fill="#000"/><rect x="954" y="363" width="1" height="2" fill="#000"/><rect x="961" y="363" width="1" height="2" fill="#000"/><rect x="967" y="363" width="1" height="2" fill="#000"/><rect x="971" y="363" width="1" height="2" fill="#000"/><rect x="977" y="363" width="1" height="2" fill="#000"/><rect x="983" y="363" width="1" height="2" fill="#000"/><rect x="986" y="363" width="1" height="2" fill="#000"/><rect x="989" y="363" width="1" height="2" fill="#000"/><rect x="993" y="363" width="1" height="2" fill="#000"/><rect x="998" y="363" width="1" height="2" fill="#000"/><rect x="1004" y="363" width="1" height="2" fill="#000"/><rect x="1009" y="363" width="1" height="2" fill="#000"/><rect x="1012" y="363" width="1" height="2" fill="#000"/><rect x="708" y="399" width="1" height="1" fill="#00ff00"/><rect x="713" y="399" width="1" height="1" fill="#00ff00"/><rect x="718" y="399" width="1" height="1" fill="#00ff00"/><rect x="724" y="399" width="1" height="1" fill="#00ff00"/><rect x="729" y="399" width="1" height="1" fill="#00ff00"/><rect x="736" y="399" width="1" height="1" fill="#00ff00"/><rect x="741" y="399" width="1" height="1" fill="#00ff00"/><rect x="746" y="399" width="1" height="1" fill="#00ff00"/><rect x="754" y="399" width="1" height="1" fill="#00ff00"/><rect x="760" y="399" width="1" height="1" fill="#00ff00"/><rect x="765" y="399" width="1" height="1" fill="#00ff00"/><rect x="770" y="399" width="1" height="1" fill="#00ff00"/><rect x="775" y="399" width="1" height="1" fill="#00ff00"/><rect x="781" y="399" width="1" height="1" fill="#00ff00"/><rect x="787" y="399" width="1" height="1" fill="#00ff00"/><rect x="795" y="399" width="1" height="1" fill="#00ff00"/><rect x="802" y="399" width="1" height="1" fill="#00ff00"/><rect x="808" y="399" width="1" height="1" fill="#00ff00"/><rect x="814" y="399" width="1" height="1" fill="#00ff00"/><rect x="819" y="399" width="1" height="1" fill="#00ff00"/><rect x="826" y="399" width="1" height="1" fill="#00ff00"/><rect x="833" y="399" width="1" height="1" fill="#00ff00"/><rect x="839" y="399" width="1" height="1" fill="#00ff00"/><rect x="846" y="399" width="1" height="1" fill="#00ff00"/><rect x="853" y="399" width="1" height="1" fill="#00ff00"/><rect x="861" y="399" width="1" height="1" fill="#00ff00"/><rect x="867" y="399" width="1" height="1" fill="#00ff00"/><rect x="874" y="399" width="1" height="1" fill="#00ff00"/><rect x="882" y="399" width="1" height="1" fill="#00ff00"/><rect x="888" y="399" width="1" height="1" fill="#00ff00"/><rect x="895" y="399" width="1" height="1" fill="#00ff00"/><rect x="901" y="399" width="1" height="1" fill="#00ff00"/><rect x="908" y="399" width="1" height="1" fill="#00ff00"/><rect x="915" y="399" width="1" height="1" fill="#00ff00"/><rect x="920" y="399" width="1" height="1" fill="#00ff00"/><rect x="926" y="399" width="1" height="1" fill="#00ff00"/><rect x="932" y="399" width="1" height="1" fill="#00ff00"/><rect x="940" y="399" width="1" height="1" fill="#00ff00"/><rect x="946" y="399" width="1" height="1" fill="#00ff00"/><rect x="953" y="399" width="1" height="1" fill="#00ff00"/><rect x="960" y="399" width="1" height="1" fill="#00ff00"/><rect x="968" y="399" width="1" height="1" fill="#00ff00"/><rect x="974" y="399" width="1" height="1" fill="#00ff00"/><rect x="981" y="399" width="1" height="1" fill="#00ff00"/><rect x="986" y="399" width="1" height="1" fill="#00ff00"/><rect x="991" y="399" width="1" height="1" fill="#00ff00"/><rect x="998" y="399" width="1" height="1" fill="#00ff00"/><rect x="1006" y="399" width="1" height="1" fill="#00ff00"/><rect x="1011" y="399" width="1" height="1" fill="#00ff00"/>
<rect x="363" y="359" width="1" height="32" fill="#000"/><rect x="397" y="359" width="1" height="29" fill="#000"/><rect x="443" y="359" width="1" height="13" fill="#000"/><rect x="474" y="359" width="1" height="13" fill="#000"/><rect x="521" y="359" width="1" height="14" fill="#000"/><rect x="615" y="359" width="1" height="26" fill="#000"/><rect x="659" y="359" width="1" height="16" fill="#000"/><rect x="692" y="359" width="1" height="23" fill="#000"/><rect x="393" y="392" width="1" height="11" fill="#000"/><rect x="397" y="385" width="1" height="18" fill="#000"/><rect x="411" y="394" width="1" height="9" fill="#000"/><rect x="476" y="387" width="1" height="16" fill="#000"/><rect x="504" y="394" width="1" height="9" fill="#000"/><rect x="524" y="394" width="1" height="9" fill="#000"/><rect x="592" y="375" width="1" height="28" fill="#000"/><rect x="600" y="380" width="1" height="23" fill="#000"/>
<rect x="753" y="363" width="1" height="36" fill="#000"/>
<rect x="772" y="363" width="1" height="36" fill="#000"/>
<rect x="786" y="363" width="1" height="36" fill="#000"/>
<rect x="913" y="363" width="1" height="36" fill="#000"/>
<rect x="924" y="363" width="1" height="36" fill="#000"/>
<rect x="976" y="363" width="1" height="36" fill="#000"/>
<rect x="992" y="363" width="1" height="20" fill="#000"/>
<path d="M333 416 L334 416 L334 415 L337 415 L337 414 L345 414 L345 415 L347 415 L347 416 L350 416 L350 417 L352 417 L352 416 L353 416 L353 415 L356 415 L356 414 L364 414 L364 415 L366 415 L366 416 L369 416 L369 417 L371 417 L371 416 L373 416 L373 415 L375 415 L375 414 L385 414 L385 415 L386 415 L386 416 L387 416 L387 415 L388 415 L388 416 L390 416 L390 417 L391 417 L391 416 L393 416 L393 415 L396 415 L396 414 L403 414 L403 415 L406 415 L406 416 L408 416 L408 417 L409 417 L409 416 L410 416 L410 417 L412 417 L412 415 L414 415 L414 414 L425 414 L425 415 L428 415 L428 417 L429 417 L429 416 L430 416 L430 417 L431 417 L431 418 L432 418 L432 416 L434 416 L434 415 L436 415 L436 414 L444 414 L444 415 L447 415 L447 416 L448 416 L448 417 L450 417 L450 416 L452 416 L452 415 L455 415 L455 414 L463 414 L463 415 L466 415 L466 417 L467 417 L467 416 L468 416 L468 417 L469 417 L469 416 L470 416 L470 417 L473 417 L473 415 L474 415 L474 414 L484 414 L484 415 L487 415 L487 416 L489 416 L489 417 L490 417 L490 416 L492 416 L492 415 L495 415 L495 414 L503 414 L503 415 L505 415 L505 416 L507 416 L507 418 L508 418 L508 417 L509 417 L509 416 L510 416 L510 417 L511 417 L511 415 L514 415 L514 414 L522 414 L522 415 L525 415 L525 416 L527 416 L527 417 L528 417 L528 416 L529 416 L529 417 L531 417 L531 415 L533 415 L533 414 L543 414 L543 415 L545 415 L545 416 L546 416 L546 415 L547 415 L547 417 L549 417 L549 416 L551 416 L551 415 L552 415 L552 416 L553 416 L553 415 L555 415 L555 414 L562 414 L562 415 L565 415 L565 416 L567 416 L567 417 L568 417 L568 418 L569 418 L569 416 L570 416 L570 415 L573 415 L573 414 L583 414 L583 415 L586 415 L586 417 L587 417 L587 418 L588 418 L588 417 L589 417 L589 416 L592 416 L592 415 L594 415 L594 414 L602 414 L602 415 L605 415 L605 416 L607 416 L607 417 L610 417 L610 415 L613 415 L613 414 L623 414 L623 415 L626 415 L626 416 L628 416 L628 417 L629 417 L629 416 L631 416 L631 415 L634 415 L634 414 L643 414 L643 415 L645 415 L645 417 L647 417 L647 418 L648 418 L648 417 L649 417 L649 416 L650 416 L650 417 L651 417 L651 415 L654 415 L654 414 L662 414 L662 415 L664 415 L664 416 L667 416 L667 417 L668 417 L668 416 L670 416 L670 415 L673 415 L673 414 L682 414 L682 415 L684 415 L684 417 L686 417 L686 416 L687 416 L687 417 L688 417 L688 416 L690 416 L690 415 L693 415 L693 414 L701 414 L701 415 L704 415 L704 416 L706 416 L706 445 L705 445 L705 446 L703 446 L703 447 L701 447 L701 448 L694 448 L694 447 L691 447 L691 445 L690 445 L690 446 L689 446 L689 445 L688 445 L688 444 L687 444 L687 445 L686 445 L686 444 L685 444 L685 446 L684 446 L684 447 L682 447 L682 448 L674 448 L674 447 L671 447 L671 446 L669 446 L669 445 L668 445 L668 444 L667 444 L667 445 L666 445 L666 444 L665 444 L665 445 L664 445 L664 447 L662 447 L662 448 L655 448 L655 447 L652 447 L652 445 L651 445 L651 446 L650 446 L650 445 L649 445 L649 444 L648 444 L648 445 L647 445 L647 446 L646 446 L646 445 L645 445 L645 447 L643 447 L643 448 L634 448 L634 447 L632 447 L632 446 L630 446 L630 444 L629 444 L629 445 L627 445 L627 446 L626 446 L626 445 L625 445 L625 447 L622 447 L622 448 L614 448 L614 447 L611 447 L611 446 L609 446 L609 445 L608 445 L608 444 L606 444 L606 446 L605 446 L605 445 L603 445 L603 447 L601 447 L601 448 L595 448 L595 447 L592 447 L592 445 L591 445 L591 446 L590 446 L590 445 L588 445 L588 444 L586 444 L586 446 L585 446 L585 447 L583 447 L583 448 L573 448 L573 447 L571 447 L571 445 L570 445 L570 446 L569 446 L569 445 L566 445 L566 446 L565 446 L565 445 L564 445 L564 447 L561 447 L561 448 L555 448 L555 447 L552 447 L552 446 L551 446 L551 444 L550 444 L550 445 L547 445 L547 444 L546 444 L546 445 L545 445 L545 447 L543 447 L543 448 L534 448 L534 447 L532 447 L532 445 L531 445 L531 446 L529 446 L529 445 L528 445 L528 444 L526 444 L526 446 L525 446 L525 445 L524 445 L524 447 L522 447 L522 448 L515 448 L515 447 L512 447 L512 446 L510 446 L510 443 L509 443 L509 444 L508 444 L508 445 L507 445 L507 446 L505 446 L505 447 L502 447 L502 448 L496 448 L496 447 L493 447 L493 445 L492 445 L492 444 L489 444 L489 445 L486 445 L486 447 L483 447 L483 448 L475 448 L475 447 L473 447 L473 445 L469 445 L469 444 L468 444 L468 445 L467 445 L467 444 L466 444 L466 445 L465 445 L465 447 L463 447 L463 448 L455 448 L455 447 L453 447 L453 446 L451 446 L451 445 L450 445 L450 444 L449 444 L449 445 L448 445 L448 446 L446 446 L446 447 L443 447 L443 448 L437 448 L437 447 L434 447 L434 445 L432 445 L432 444 L429 444 L429 445 L428 445 L428 446 L427 446 L427 447 L424 447 L424 448 L415 448 L415 447 L412 447 L412 446 L410 446 L410 445 L407 445 L407 446 L406 446 L406 445 L405 445 L405 447 L403 447 L403 448 L396 448 L396 447 L394 447 L394 446 L392 446 L392 444 L390 444 L390 445 L387 445 L387 447 L384 447 L384 448 L376 448 L376 447 L373 447 L373 446 L371 446 L371 445 L370 445 L370 444 L369 444 L369 445 L368 445 L368 446 L367 446 L367 445 L366 445 L366 447 L363 447 L363 448 L356 448 L356 447 L354 447 L354 446 L352 446 L352 445 L351 445 L351 444 L350 444 L350 445 L349 445 L349 446 L348 446 L348 445 L347 445 L347 447 L344 447 L344 448 L337 448 L337 447 L335 447 L335 446 L334 446 L334 444 L333 444Z" fill="#00ff00"/>
<rect x="706" y="416" width="309" height="28" fill="#00ff00"/>
<rect x="709" y="416" width="1" height="2" fill="#000"/><rect x="714" y="416" width="1" height="2" fill="#000"/><rect x="719" y="416" width="1" height="2" fill="#000"/><rect x="722" y="416" width="1" height="2" fill="#000"/><rect x="727" y="416" width="1" height="2" fill="#000"/><rect x="732" y="416" width="1" height="2" fill="#000"/><rect x="739" y="416" width="1" height="2" fill="#000"/><rect x="746" y="416" width="1" height="2" fill="#000"/><rect x="752" y="416" width="1" height="2" fill="#000"/><rect x="757" y="416" width="1" height="2" fill="#000"/><rect x="764" y="416" width="1" height="2" fill="#000"/><rect x="767" y="416" width="1" height="2" fill="#000"/><rect x="773" y="416" width="1" height="2" fill="#000"/><rect x="776" y="416" width="1" height="2" fill="#000"/><rect x="782" y="416" width="1" height="2" fill="#000"/><rect x="789" y="416" width="1" height="2" fill="#000"/><rect x="792" y="416" width="1" height="2" fill="#000"/><rect x="797" y="416" width="1" height="2" fill="#000"/><rect x="803" y="416" width="1" height="2" fill="#000"/><rect x="806" y="416" width="1" height="2" fill="#000"/><rect x="813" y="416" width="1" height="2" fill="#000"/><rect x="820" y="416" width="1" height="2" fill="#000"/><rect x="824" y="416" width="1" height="2" fill="#000"/><rect x="827" y="416" width="1" height="2" fill="#000"/><rect x="834" y="416" width="1" height="2" fill="#000"/><rect x="839" y="416" width="1" height="2" fill="#000"/><rect x="843" y="416" width="1" height="2" fill="#000"/><rect x="849" y="416" width="1" height="2" fill="#000"/><rect x="852" y="416" width="1" height="2" fill="#000"/><rect x="859" y="416" width="1" height="2" fill="#000"/><rect x="863" y="416" width="1" height="2" fill="#000"/><rect x="868" y="416" width="1" height="2" fill="#000"/><rect x="871" y="416" width="1" height="2" fill="#000"/><rect x="874" y="416" width="1" height="2" fill="#000"/><rect x="879" y="416" width="1" height="2" fill="#000"/><rect x="885" y="416" width="1" height="2" fill="#000"/><rect x="888" y="416" width="1" height="2" fill="#000"/><rect x="894" y="416" width="1" height="2" fill="#000"/><rect x="898" y="416" width="1" height="2" fill="#000"/><rect x="904" y="416" width="1" height="2" fill="#000"/><rect x="911" y="416" width="1" height="2" fill="#000"/><rect x="916" y="416" width="1" height="2" fill="#000"/><rect x="923" y="416" width="1" height="2" fill="#000"/><rect x="928" y="416" width="1" height="2" fill="#000"/><rect x="935" y="416" width="1" height="2" fill="#000"/><rect x="939" y="416" width="1" height="2" fill="#000"/><rect x="944" y="416" width="1" height="2" fill="#000"/><rect x="948" y="416" width="1" height="2" fill="#000"/><rect x="952" y="416" width="1" height="2" fill="#000"/><rect x="958" y="416" width="1" height="2" fill="#000"/><rect x="962" y="416" width="1" height="2" fill="#000"/><rect x="965" y="416" width="1" height="2" fill="#000"/><rect x="968" y="416" width="1" height="2" fill="#000"/><rect x="974" y="416" width="1" height="2" fill="#000"/><rect x="981" y="416" width="1" height="2" fill="#000"/><rect x="984" y="416" width="1" height="2" fill="#000"/><rect x="989" y="416" width="1" height="2" fill="#000"/><rect x="994" y="416" width="1" height="2" fill="#000"/><rect x="997" y="416" width="1" height="2" fill="#000"/><rect x="1003" y="416" width="1" height="2" fill="#000"/><rect x="1009" y="416" width="1" height="2" fill="#000"/><rect x="1012" y="416" width="1" height="2" fill="#000"/><rect x="711" y="444" width="1" height="1" fill="#00ff00"/><rect x="716" y="444" width="1" height="1" fill="#00ff00"/><rect x="723" y="444" width="1" height="1" fill="#00ff00"/><rect x="729" y="444" width="1" height="1" fill="#00ff00"/><rect x="736" y="444" width="1" height="1" fill="#00ff00"/><rect x="743" y="444" width="1" height="1" fill="#00ff00"/><rect x="751" y="444" width="1" height="1" fill="#00ff00"/><rect x="757" y="444" width="1" height="1" fill="#00ff00"/><rect x="765" y="444" width="1" height="1" fill="#00ff00"/><rect x="771" y="444" width="1" height="1" fill="#00ff00"/><rect x="779" y="444" width="1" height="1" fill="#00ff00"/><rect x="785" y="444" width="1" height="1" fill="#00ff00"/><rect x="790" y="444" width="1" height="1" fill="#00ff00"/><rect x="797" y="444" width="1" height="1" fill="#00ff00"/><rect x="804" y="444" width="1" height="1" fill="#00ff00"/><rect x="810" y="444" width="1" height="1" fill="#00ff00"/><rect x="818" y="444" width="1" height="1" fill="#00ff00"/><rect x="825" y="444" width="1" height="1" fill="#00ff00"/><rect x="831" y="444" width="1" height="1" fill="#00ff00"/><rect x="839" y="444" width="1" height="1" fill="#00ff00"/><rect x="847" y="444" width="1" height="1" fill="#00ff00"/><rect x="854" y="444" width="1" height="1" fill="#00ff00"/><rect x="860" y="444" width="1" height="1" fill="#00ff00"/><rect x="866" y="444" width="1" height="1" fill="#00ff00"/><rect x="873" y="444" width="1" height="1" fill="#00ff00"/><rect x="881" y="444" width="1" height="1" fill="#00ff00"/><rect x="887" y="444" width="1" height="1" fill="#00ff00"/><rect x="893" y="444" width="1" height="1" fill="#00ff00"/><rect x="900" y="444" width="1" height="1" fill="#00ff00"/><rect x="907" y="444" width="1" height="1" fill="#00ff00"/><rect x="913" y="444" width="1" height="1" fill="#00ff00"/><rect x="919" y="444" width="1" height="1" fill="#00ff00"/><rect x="925" y="444" width="1" height="1" fill="#00ff00"/><rect x="932" y="444" width="1" height="1" fill="#00ff00"/><rect x="939" y="444" width="1" height="1" fill="#00ff00"/><rect x="945" y="444" width="1" height="1" fill="#00ff00"/><rect x="951" y="444" width="1" height="1" fill="#00ff00"/><rect x="958" y="444" width="1" height="1" fill="#00ff00"/><rect x="964" y="444" width="1" height="1" fill="#00ff00"/><rect x="971" y="444" width="1" height="1" fill="#00ff00"/><rect x="976" y="444" width="1" height="1" fill="#00ff00"/><rect x="982" y="444" width="1" height="1" fill="#00ff00"/><rect x="987" y="444" width="1" height="1" fill="#00ff00"/><rect x="993" y="444" width="1" height="1" fill="#00ff00"/><rect x="1001" y="444" width="1" height="1" fill="#00ff00"/><rect x="1007" y="444" width="1" height="1" fill="#00ff00"/><rect x="1013" y="444" width="1" height="1" fill="#00ff00"/>
<rect x="380" y="414" width="1" height="12" fill="#000"/><rect x="411" y="414" width="1" height="23" fill="#000"/><rect x="504" y="414" width="1" height="16" fill="#000"/><rect x="612" y="414" width="1" height="11" fill="#000"/><rect x="693" y="414" width="1" height="14" fill="#000"/><rect x="696" y="414" width="1" height="18" fill="#000"/><rect x="335" y="437" width="1" height="11" fill="#000"/><rect x="363" y="438" width="1" height="10" fill="#000"/><rect x="411" y="430" width="1" height="18" fill="#000"/><rect x="560" y="438" width="1" height="10" fill="#000"/>
<rect x="724" y="416" width="1" height="28" fill="#000"/>
<rect x="753" y="416" width="1" height="28" fill="#000"/>
<rect x="786" y="416" width="1" height="28" fill="#000"/>
<rect x="866" y="416" width="1" height="28" fill="#000"/>
<rect x="882" y="416" width="1" height="28" fill="#000"/>
<rect x="333" y="243" width="682" height="1" fill="#006e00"/>
<path d="M333 234.5 L334 234.5 L335 234.5 L336 234.5 L337 234.5 L338 234.5 L339 234.5 L340 235.5 L341 235.5 L342 235.5 L343 236.5 L344 236.5 L345 237.5 L346 238.5 L347 238.5 L348 239.5 L349 240.5 L350 240.5 L351 241.5 L352 242.5 L353 242.5 L354 243.5 L355 244.5 L356 245.5 L357 245.5 L358 246.5 L359 247.5 L360 247.5 L361 248.5 L362 249.5 L363 249.5 L364 250.5 L365 250.5 L366 251.5 L367 251.5 L368 252.5 L369 252.5 L370 252.5 L371 252.5 L372 252.5 L373 252.5 L374 252.5 L375 252.5 L376 252.5 L377 252.5 L378 252.5 L379 252.5 L380 251.5 L381 251.5 L382 250.5 L383 250.5 L384 249.5 L385 249.5 L386 248.5 L387 248.5 L388 247.5 L389 246.5 L390 246.5 L391 245.5 L392 244.5 L393 243.5 L394 243.5 L395 242.5 L396 241.5 L397 240.5 L398 240.5 L399 239.5 L400 238.5 L401 238.5 L402 237.5 L403 237.5 L404 236.5 L405 236.5 L406 235.5 L407 235.5 L408 234.5 L409 234.5 L410 234.5 L411 234.5 L412 234.5 L413 234.5 L414 234.5 L415 234.5 L416 234.5 L417 234.5 L418 234.5 L419 234.5 L420 235.5 L421 235.5 L422 236.5 L423 236.5 L424 237.5 L425 237.5 L426 238.5 L427 238.5 L428 239.5 L429 240.5 L430 241.5 L431 241.5 L432 242.5 L433 243.5 L434 243.5 L435 244.5 L436 245.5 L437 246.5 L438 246.5 L439 247.5 L440 248.5 L441 248.5 L442 249.5 L443 250.5 L444 250.5 L445 251.5 L446 251.5 L447 251.5 L448 252.5 L449 252.5 L450 252.5 L451 252.5 L452 252.5 L453 252.5 L454 252.5 L455 252.5 L456 252.5 L457 252.5 L458 252.5 L459 251.5 L460 251.5 L461 251.5 L462 250.5 L463 250.5 L464 249.5 L465 249.5 L466 248.5 L467 247.5 L468 247.5 L469 246.5 L470 245.5 L471 245.5 L472 244.5 L473 243.5 L474 242.5 L475 242.5 L476 241.5 L477 240.5 L478 239.5 L479 239.5 L480 238.5 L481 238.5 L482 237.5 L483 236.5 L484 236.5 L485 235.5 L486 235.5 L487 235.5 L488 234.5 L489 234.5 L490 234.5 L491 234.5 L492 234.5 L493 234.5 L494 234.5 L495 234.5 L496 234.5 L497 234.5 L498 234.5 L499 235.5 L500 235.5 L501 235.5 L502 236.5 L503 236.5 L504 237.5 L505 237.5 L506 238.5 L507 239.5 L508 239.5 L509 240.5 L510 241.5 L511 242.5 L512 242.5 L513 243.5 L514 244.5 L515 244.5 L516 245.5 L517 246.5 L518 247.5 L519 247.5 L520 248.5 L521 249.5 L522 249.5 L523 250.5 L524 250.5 L525 251.5 L526 251.5 L527 251.5 L528 252.5 L529 252.5 L530 252.5 L531 252.5 L532 252.5 L533 252.5 L534 252.5 L535 252.5 L536 252.5 L537 252.5 L538 252.5 L539 251.5 L540 251.5 L541 251.5 L542 250.5 L543 250.5 L544 249.5 L545 248.5 L546 248.5 L547 247.5 L548 247.5 L549 246.5 L550 245.5 L551 244.5 L552 244.5 L553 243.5 L554 242.5 L555 241.5 L556 241.5 L557 240.5 L558 239.5 L559 239.5 L560 238.5 L561 237.5 L562 237.5 L563 236.5 L564 236.5 L565 235.5 L566 235.5 L567 234.5 L568 234.5 L569 234.5 L570 234.5 L571 234.5 L572 234.5 L573 234.5 L574 234.5 L575 234.5 L576 234.5 L577 234.5 L578 234.5 L579 235.5 L580 235.5 L581 235.5 L582 236.5 L583 236.5 L584 237.5 L585 238.5 L586 238.5 L587 239.5 L588 240.5 L589 240.5 L590 241.5 L591 242.5 L592 243.5 L593 243.5 L594 244.5 L595 245.5 L596 245.5 L597 246.5 L598 247.5 L599 248.5 L600 248.5 L601 249.5 L602 249.5 L603 250.5 L604 250.5 L605 251.5 L606 251.5 L607 252.5 L608 252.5 L609 252.5 L610 252.5 L611 252.5 L612 252.5 L613 252.5 L614 252.5 L615 252.5 L616 252.5 L617 252.5 L618 252.5 L619 251.5 L620 251.5 L621 250.5 L622 250.5 L623 249.5 L624 249.5 L625 248.5 L626 248.5 L627 247.5 L628 246.5 L629 246.5 L630 245.5 L631 244.5 L632 243.5 L633 243.5 L634 242.5 L635 241.5 L636 240.5 L637 240.5 L638 239.5 L639 238.5 L640 238.5 L641 237.5 L642 237.5 L643 236.5 L644 236.5 L645 235.5 L646 235.5 L647 234.5 L648 234.5 L649 234.5 L650 234.5 L651 234.5 L652 234.5 L653 234.5 L654 234.5 L655 234.5 L656 234.5 L657 234.5 L658 234.5 L659 235.5 L660 235.5 L661 236.5 L662 236.5 L663 237.5 L664 237.5 L665 238.5 L666 239.5 L667 239.5 L668 240.5 L669 241.5 L670 241.5 L671 242.5 L672 243.5 L673 244.5 L674 244.5 L675 245.5 L676 246.5 L677 246.5 L678 247.5 L679 248.5 L680 248.5 L681 249.5 L682 250.5 L683 250.5 L684 251.5 L685 251.5 L686 251.5 L687 252.5 L688 252.5 L689 252.5 L690 252.5 L691 252.5 L692 252.5 L693 252.5 L694 252.5 L695 252.5 L696 252.5 L697 252.5 L698 251.5 L699 251.5 L700 251.5 L701 250.5 L702 250.5 L703 249.5 L704 249.5 L705 248.5 L706 247.5 L707 247.5 L708 246.5 L709 245.5 L710 245.5 L711 244.5 L712 243.5 L713 242.5 L714 242.5 L715 241.5 L716 240.5 L717 239.5 L718 239.5 L719 238.5 L720 237.5 L721 237.5 L722 236.5 L723 236.5 L724 235.5 L725 235.5 L726 235.5 L727 234.5 L728 234.5 L729 234.5 L730 234.5 L731 234.5 L732 234.5 L733 234.5 L734 234.5 L735 234.5 L736 234.5 L737 234.5 L738 235.5 L739 235.5 L740 235.5 L741 236.5 L742 236.5 L743 237.5 L744 237.5 L745 238.5 L746 239.5 L747 239.5 L748 240.5 L749 241.5 L750 242.5 L751 242.5 L752 243.5 L753 244.5 L754 245.5 L755 245.5 L756 246.5 L757 247.5 L758 247.5 L759 248.5 L760 249.5 L761 249.5 L762 250.5 L763 250.5 L764 251.5 L765 251.5 L766 251.5 L767 252.5 L768 252.5 L769 252.5 L770 252.5 L771 252.5 L772 252.5 L773 252.5 L774 252.5 L775 252.5 L776 252.5 L777 252.5 L778 251.5 L779 251.5 L780 251.5 L781 250.5 L782 250.5 L783 249.5 L784 248.5 L785 248.5 L786 247.5 L787 246.5 L788 246.5 L789 245.5 L790 244.5 L791 244.5 L792 243.5 L793 242.5 L794 241.5 L795 241.5 L796 240.5 L797 239.5 L798 239.5 L799 238.5 L800 237.5 L801 237.5 L802 236.5 L803 236.5 L804 235.5 L805 235.5 L806 234.5 L807 234.5 L808 234.5 L809 234.5 L810 234.5 L811 234.5 L812 234.5 L813 234.5 L814 234.5 L815 234.5 L816 234.5 L817 234.5 L818 235.5 L819 235.5 L820 236.5 L821 236.5 L822 237.5 L823 237.5 L824 238.5 L825 238.5 L826 239.5 L827 240.5 L828 240.5 L829 241.5 L830 242.5 L831 243.5 L832 243.5 L833 244.5 L834 245.5 L835 246.5 L836 246.5 L837 247.5 L838 248.5 L839 248.5 L840 249.5 L841 249.5 L842 250.5 L843 250.5 L844 251.5 L845 251.5 L846 252.5 L847 252.5 L848 252.5 L849 252.5 L850 252.5 L851 252.5 L852 252.5 L853 252.5 L854 252.5 L855 252.5 L856 252.5 L857 252.5 L858 251.5 L859 251.5 L860 250.5 L861 250.5 L862 249.5 L863 249.5 L864 248.5 L865 248.5 L866 247.5 L867 246.5 L868 245.5 L869 245.5 L870 244.5 L871 243.5 L872 243.5 L873 242.5 L874 241.5 L875 240.5 L876 240.5 L877 239.5 L878 238.5 L879 238.5 L880 237.5 L881 236.5 L882 236.5 L883 235.5 L884 235.5 L885 235.5 L886 234.5 L887 234.5 L888 234.5 L889 234.5 L890 234.5 L891 234.5 L892 234.5 L893 234.5 L894 234.5 L895 234.5 L896 234.5 L897 234.5 L898 235.5 L899 235.5 L900 236.5 L901 236.5 L902 237.5 L903 237.5 L904 238.5 L905 239.5 L906 239.5 L907 240.5 L908 241.5 L909 241.5 L910 242.5 L911 243.5 L912 244.5 L913 244.5 L914 245.5 L915 246.5 L916 247.5 L917 247.5 L918 248.5 L919 248.5 L920 249.5 L921 250.5 L922 250.5 L923 251.5 L924 251.5 L925 251.5 L926 252.5 L927 252.5 L928 252.5 L929 252.5 L930 252.5 L931 252.5 L932 252.5 L933 252.5 L934 252.5 L935 252.5 L936 252.5 L937 251.5 L938 251.5 L939 251.5 L940 250.5 L941 250.5 L942 249.5 L943 249.5 L944 248.5 L945 247.5 L946 247.5 L947 246.5 L948 245.5 L949 244.5 L950 244.5 L951 243.5 L952 242.5 L953 242.5 L954 241.5 L955 240.5 L956 239.5 L957 239.5 L958 238.5 L959 237.5 L960 237.5 L961 236.5 L962 236.5 L963 235.5 L964 235.5 L965 235.5 L966 234.5 L967 234.5 L968 234.5 L969 234.5 L970 234.5 L971 234.5 L972 234.5 L973 234.5 L974 234.5 L975 234.5 L976 234.5 L977 235.5 L978 235.5 L979 235.5 L980 236.5 L981 236.5 L982 237.5 L983 238.5 L984 238.5 L985 239.5 L986 239.5 L987 240.5 L988 241.5 L989 242.5 L990 242.5 L991 243.5 L992 244.5 L993 245.5 L994 245.5 L995 246.5 L996 247.5 L997 247.5 L998 248.5 L999 249.5 L1000 249.5 L1001 250.5 L1002 250.5 L1003 251.5 L1004 251.5 L1005 251.5 L1006 252.5 L1007 252.5 L1008 252.5 L1009 252.5 L1010 252.5 L1011 252.5 L1012 252.5 L1013 252.5 L1014 252.5 L1015 252.5" fill="none" stroke="#00ff00" stroke-width="1"/>
<rect x="333" y="268" width="682" height="1" fill="#006e00"/>
<path d="M333 269.5 L334 268.5 L335 267.5 L336 266.5 L337 266.5 L338 265.5 L339 264.5 L340 264.5 L341 263.5 L342 262.5 L343 262.5 L344 261.5 L345 261.5 L346 260.5 L347 260.5 L348 259.5 L349 259.5 L350 259.5 L351 259.5 L352 259.5 L353 259.5 L354 259.5 L355 259.5 L356 259.5 L357 259.5 L358 259.5 L359 259.5 L360 260.5 L361 260.5 L362 261.5 L363 261.5 L364 261.5 L365 262.5 L366 263.5 L367 263.5 L368 264.5 L369 265.5 L370 265.5 L371 266.5 L372 267.5 L373 268.5 L374 268.5 L375 269.5 L376 270.5 L377 270.5 L378 271.5 L379 272.5 L380 273.5 L381 273.5 L382 274.5 L383 274.5 L384 275.5 L385 275.5 L386 276.5 L387 276.5 L388 277.5 L389 277.5 L390 277.5 L391 277.5 L392 277.5 L393 277.5 L394 277.5 L395 277.5 L396 277.5 L397 277.5 L398 277.5 L399 277.5 L400 276.5 L401 276.5 L402 275.5 L403 275.5 L404 274.5 L405 274.5 L406 273.5 L407 273.5 L408 272.5 L409 271.5 L410 271.5 L411 270.5 L412 269.5 L413 268.5 L414 268.5 L415 267.5 L416 266.5 L417 265.5 L418 265.5 L419 264.5 L420 263.5 L421 263.5 L422 262.5 L423 262.5 L424 261.5 L425 261.5 L426 260.5 L427 260.5 L428 259.5 L429 259.5 L430 259.5 L431 259.5 L432 259.5 L433 259.5 L434 259.5 L435 259.5 L436 259.5 L437 259.5 L438 259.5 L439 259.5 L440 260.5 L441 260.5 L442 261.5 L443 261.5 L444 262.5 L445 262.5 L446 263.5 L447 264.5 L448 264.5 L449 265.5 L450 266.5 L451 266.5 L452 267.5 L453 268.5 L454 269.5 L455 269.5 L456 270.5 L457 271.5 L458 271.5 L459 272.5 L460 273.5 L461 273.5 L462 274.5 L463 275.5 L464 275.5 L465 276.5 L466 276.5 L467 276.5 L468 277.5 L469 277.5 L470 277.5 L471 277.5 L472 277.5 L473 277.5 L474 277.5 L475 277.5 L476 277.5 L477 277.5 L478 277.5 L479 276.5 L480 276.5 L481 276.5 L482 275.5 L483 275.5 L484 274.5 L485 274.5 L486 273.5 L487 272.5 L488 272.5 L489 271.5 L490 270.5 L491 270.5 L492 269.5 L493 268.5 L494 267.5 L495 267.5 L496 266.5 L497 265.5 L498 264.5 L499 264.5 L500 263.5 L501 262.5 L502 262.5 L503 261.5 L504 261.5 L505 260.5 L506 260.5 L507 260.5 L508 259.5 L509 259.5 L510 259.5 L511 259.5 L512 259.5 L513 259.5 L514 259.5 L515 259.5 L516 259.5 L517 259.5 L518 259.5 L519 260.5 L520 260.5 L521 260.5 L522 261.5 L523 261.5 L524 262.5 L525 262.5 L526 263.5 L527 264.5 L528 264.5 L529 265.5 L530 266.5 L531 267.5 L532 267.5 L533 268.5 L534 269.5 L535 270.5 L536 270.5 L537 271.5 L538 272.5 L539 272.5 L540 273.5 L541 274.5 L542 274.5 L543 275.5 L544 275.5 L545 276.5 L546 276.5 L547 276.5 L548 277.5 L549 277.5 L550 277.5 L551 277.5 L552 277.5 L553 277.5 L554 277.5 L555 277.5 L556 277.5 L557 277.5 L558 277.5 L559 276.5 L560 276.5 L561 276.5 L562 275.5 L563 275.5 L564 274.5 L565 273.5 L566 273.5 L567 272.5 L568 271.5 L569 271.5 L570 270.5 L571 269.5 L572 269.5 L573 268.5 L574 267.5 L575 266.5 L576 266.5 L577 265.5 L578 264.5 L579 264.5 L580 263.5 L581 262.5 L582 262.5 L583 261.5 L584 261.5 L585 260.5 L586 260.5 L587 259.5 L588 259.5 L589 259.5 L590 259.5 L591 259.5 L592 259.5 L593 259.5 L594 259.5 L595 259.5 L596 259.5 L597 259.5 L598 259.5 L599 260.5 L600 260.5 L601 261.5 L602 261.5 L603 262.5 L604 262.5 L605 263.5 L606 263.5 L607 264.5 L608 265.5 L609 265.5 L610 266.5 L611 267.5 L612 268.5 L613 268.5 L614 269.5 L615 270.5 L616 271.5 L617 271.5 L618 272.5 L619 273.5 L620 273.5 L621 274.5 L622 274.5 L623 275.5 L624 275.5 L625 276.5 L626 276.5 L627 277.5 L628 277.5 L629 277.5 L630 277.5 L631 277.5 L632 277.5 L633 277.5 L634 277.5 L635 277.5 L636 277.5 L637 277.5 L638 277.5 L639 276.5 L640 276.5 L641 275.5 L642 275.5 L643 274.5 L644 274.5 L645 273.5 L646 273.5 L647 272.5 L648 271.5 L649 270.5 L650 270.5 L651 269.5 L652 268.5 L653 268.5 L654 267.5 L655 266.5 L656 265.5 L657 265.5 L658 264.5 L659 263.5 L660 263.5 L661 262.5 L662 261.5 L663 261.5 L664 260.5 L665 260.5 L666 260.5 L667 259.5 L668 259.5 L669 259.5 L670 259.5 L671 259.5 L672 259.5 L673 259.5 L674 259.5 L675 259.5 L676 259.5 L677 259.5 L678 259.5 L679 260.5 L680 260.5 L681 261.5 L682 261.5 L683 262.5 L684 262.5 L685 263.5 L686 264.5 L687 264.5 L688 265.5 L689 266.5 L690 266.5 L691 267.5 L692 268.5 L693 269.5 L694 269.5 L695 270.5 L696 271.5 L697 272.5 L698 272.5 L699 273.5 L700 273.5 L701 274.5 L702 275.5 L703 275.5 L704 276.5 L705 276.5 L706 276.5 L707 277.5 L708 277.5 L709 277.5 L710 277.5 L711 277.5 L712 277.5 L713 277.5 L714 277.5 L715 277.5 L716 277.5 L717 277.5 L718 276.5 L719 276.5 L720 276.5 L721 275.5 L722 275.5 L723 274.5 L724 274.5 L725 273.5 L726 272.5 L727 272.5 L728 271.5 L729 270.5 L730 269.5 L731 269.5 L732 268.5 L733 267.5 L734 267.5 L735 266.5 L736 265.5 L737 264.5 L738 264.5 L739 263.5 L740 262.5 L741 262.5 L742 261.5 L743 261.5 L744 260.5 L745 260.5 L746 260.5 L747 259.5 L748 259.5 L749 259.5 L750 259.5 L751 259.5 L752 259.5 L753 259.5 L754 259.5 L755 259.5 L756 259.5 L757 259.5 L758 260.5 L759 260.5 L760 260.5 L761 261.5 L762 261.5 L763 262.5 L764 263.5 L765 263.5 L766 264.5 L767 264.5 L768 265.5 L769 266.5 L770 267.5 L771 267.5 L772 268.5 L773 269.5 L774 270.5 L775 270.5 L776 271.5 L777 272.5 L778 272.5 L779 273.5 L780 274.5 L781 274.5 L782 275.5 L783 275.5 L784 276.5 L785 276.5 L786 277.5 L787 277.5 L788 277.5 L789 277.5 L790 277.5 L791 277.5 L792 277.5 L793 277.5 L794 277.5 L795 277.5 L796 277.5 L797 277.5 L798 276.5 L799 276.5 L800 276.5 L801 275.5 L802 275.5 L803 274.5 L804 273.5 L805 273.5 L806 272.5 L807 271.5 L808 271.5 L809 270.5 L810 269.5 L811 268.5 L812 268.5 L813 267.5 L814 266.5 L815 266.5 L816 265.5 L817 264.5 L818 263.5 L819 263.5 L820 262.5 L821 262.5 L822 261.5 L823 261.5 L824 260.5 L825 260.5 L826 259.5 L827 259.5 L828 259.5 L829 259.5 L830 259.5 L831 259.5 L832 259.5 L833 259.5 L834 259.5 L835 259.5 L836 259.5 L837 259.5 L838 260.5 L839 260.5 L840 261.5 L841 261.5 L842 262.5 L843 262.5 L844 263.5 L845 263.5 L846 264.5 L847 265.5 L848 265.5 L849 266.5 L850 267.5 L851 268.5 L852 268.5 L853 269.5 L854 270.5 L855 271.5 L856 271.5 L857 272.5 L858 273.5 L859 273.5 L860 274.5 L861 274.5 L862 275.5 L863 275.5 L864 276.5 L865 276.5 L866 277.5 L867 277.5 L868 277.5 L869 277.5 L870 277.5 L871 277.5 L872 277.5 L873 277.5 L874 277.5 L875 277.5 L876 277.5 L877 277.5 L878 276.5 L879 276.5 L880 275.5 L881 275.5 L882 274.5 L883 274.5 L884 273.5 L885 272.5 L886 272.5 L887 271.5 L888 270.5 L889 270.5 L890 269.5 L891 268.5 L892 267.5 L893 267.5 L894 266.5 L895 265.5 L896 265.5 L897 264.5 L898 263.5 L899 263.5 L900 262.5 L901 261.5 L902 261.5 L903 260.5 L904 260.5 L905 260.5 L906 259.5 L907 259.5 L908 259.5 L909 259.5 L910 259.5 L911 259.5 L912 259.5 L913 259.5 L914 259.5 L915 259.5 L916 259.5 L917 260.5 L918 260.5 L919 260.5 L920 261.5 L921 261.5 L922 262.5 L923 262.5 L924 263.5 L925 264.5 L926 264.5 L927 265.5 L928 266.5 L929 266.5 L930 267.5 L931 268.5 L932 269.5 L933 269.5 L934 270.5 L935 271.5 L936 272.5 L937 272.5 L938 273.5 L939 274.5 L940 274.5 L941 275.5 L942 275.5 L943 276.5 L944 276.5 L945 276.5 L946 277.5 L947 277.5 L948 277.5 L949 277.5 L950 277.5 L951 277.5 L952 277.5 L953 277.5 L954 277.5 L955 277.5 L956 277.5 L957 276.5 L958 276.5 L959 276.5 L960 275.5 L961 275.5 L962 274.5 L963 274.5 L964 273.5 L965 272.5 L966 272.5 L967 271.5 L968 270.5 L969 269.5 L970 269.5 L971 268.5 L972 267.5 L973 266.5 L974 266.5 L975 265.5 L976 264.5 L977 264.5 L978 263.5 L979 262.5 L980 262.5 L981 261.5 L982 261.5 L983 260.5 L984 260.5 L985 260.5 L986 259.5 L987 259.5 L988 259.5 L989 259.5 L990 259.5 L991 259.5 L992 259.5 L993 259.5 L994 259.5 L995 259.5 L996 259.5 L997 260.5 L998 260.5 L999 260.5 L1000 261.5 L1001 261.5 L1002 262.5 L1003 263.5 L1004 263.5 L1005 264.5 L1006 265.5 L1007 265.5 L1008 266.5 L1009 267.5 L1010 267.5 L1011 268.5 L1012 269.5 L1013 270.5 L1014 270.5 L1015 271.5" fill="none" stroke="#00ff00" stroke-width="1"/>
<rect x="333" y="293" width="682" height="1" fill="#006e00"/>
<path d="M333 297.5 L708 297.5 L708 297.5 L709 296.5 L710 295.5 L711 295.5 L712 294.5 L713 293.5 L714 292.5 L715 292.5 L716 291.5 L717 290.5 L718 290.5 L719 289.5 L720 288.5 L721 288.5 L722 287.5 L723 286.5 L724 286.5 L725 285.5 L726 285.5 L727 285.5 L728 284.5 L729 284.5 L730 284.5 L731 284.5 L732 284.5 L733 284.5 L734 284.5 L735 284.5 L736 284.5 L737 284.5 L738 284.5 L739 285.5 L740 285.5 L741 285.5 L742 286.5 L743 286.5 L744 287.5 L745 287.5 L746 288.5 L747 289.5 L748 289.5 L749 290.5 L750 291.5 L751 291.5 L752 292.5 L753 293.5 L754 294.5 L755 294.5 L756 295.5 L757 296.5 L758 297.5 L759 297.5 L760 298.5 L761 299.5 L762 299.5 L763 300.5 L764 300.5 L765 301.5 L766 301.5 L767 301.5 L768 302.5 L769 302.5 L770 302.5 L771 302.5 L772 302.5 L773 302.5 L774 302.5 L775 302.5 L776 302.5 L777 302.5 L778 302.5 L779 301.5 L780 301.5 L781 301.5 L782 300.5 L783 300.5 L784 299.5 L785 299.5 L786 298.5 L787 297.5 L788 297.5 L789 296.5 L790 295.5 L791 294.5 L792 294.5 L793 293.5 L794 292.5 L795 291.5 L796 291.5 L797 290.5 L798 289.5 L799 289.5 L800 288.5 L801 287.5 L802 287.5 L803 286.5 L804 286.5 L805 285.5 L806 285.5 L807 285.5 L808 284.5 L809 284.5 L810 284.5 L811 284.5 L812 284.5 L813 284.5 L814 284.5 L815 284.5 L816 284.5 L817 284.5 L818 284.5 L819 285.5 L820 285.5 L821 285.5 L822 286.5 L823 286.5 L824 287.5 L825 288.5 L826 288.5 L827 289.5 L828 290.5 L829 290.5 L830 291.5 L831 292.5 L832 292.5 L833 293.5 L834 294.5 L835 295.5 L836 295.5 L837 296.5 L838 297.5 L839 297.5 L840 298.5 L841 299.5 L842 299.5 L843 300.5 L844 300.5 L845 301.5 L846 301.5 L847 302.5 L848 302.5 L849 302.5 L850 302.5 L851 302.5 L852 302.5 L853 302.5 L854 302.5 L855 302.5 L856 302.5 L857 302.5 L858 302.5 L859 301.5 L860 301.5 L861 300.5 L862 300.5 L863 299.5 L864 299.5 L865 298.5 L866 298.5 L867 297.5 L868 296.5 L869 296.5 L870 295.5 L871 294.5 L872 293.5 L873 293.5 L874 292.5 L875 291.5 L876 290.5 L877 290.5 L878 289.5 L879 288.5 L880 288.5 L881 287.5 L882 287.5 L883 286.5 L884 286.5 L885 285.5 L886 285.5 L887 284.5 L888 284.5 L889 284.5 L890 284.5 L891 284.5 L892 284.5 L893 284.5 L894 284.5 L895 284.5 L896 284.5 L897 284.5 L898 284.5 L899 285.5 L900 285.5 L901 286.5 L902 286.5 L903 287.5 L904 287.5 L905 288.5 L906 288.5 L907 289.5 L908 290.5 L909 291.5 L910 291.5 L911 292.5 L912 293.5 L913 293.5 L914 294.5 L915 295.5 L916 296.5 L917 296.5 L918 297.5 L919 298.5 L920 298.5 L921 299.5 L922 299.5 L923 300.5 L924 300.5 L925 301.5 L926 301.5 L927 302.5 L928 302.5 L929 302.5 L930 302.5 L931 302.5 L932 302.5 L933 302.5 L934 302.5 L935 302.5 L936 302.5 L937 302.5 L938 302.5 L939 301.5 L940 301.5 L941 300.5 L942 300.5 L943 299.5 L944 299.5 L945 298.5 L946 297.5 L947 297.5 L948 296.5 L949 295.5 L950 295.5 L951 294.5 L952 293.5 L953 292.5 L954 292.5 L955 291.5 L956 290.5 L957 290.5 L958 289.5 L959 288.5 L960 288.5 L961 287.5 L962 286.5 L963 286.5 L964 285.5 L965 285.5 L966 285.5 L967 284.5 L968 284.5 L969 284.5 L970 284.5 L971 284.5 L972 284.5 L973 284.5 L974 284.5 L975 284.5 L976 284.5 L977 284.5 L978 285.5 L979 285.5 L980 285.5 L981 286.5 L982 286.5 L983 287.5 L984 287.5 L985 288.5 L986 289.5 L987 289.5 L988 290.5 L989 291.5 L990 291.5 L991 292.5 L992 293.5 L993 294.5 L994 294.5 L995 295.5 L996 296.5 L997 297.5 L998 297.5 L999 298.5 L1000 299.5 L1001 299.5 L1002 300.5 L1003 300.5 L1004 301.5 L1005 301.5 L1006 301.5 L1007 302.5 L1008 302.5 L1009 302.5 L1010 302.5 L1011 302.5 L1012 302.5 L1013 302.5 L1014 302.5 L1015 302.5" fill="none" stroke="#00ff00" stroke-width="1"/>
<rect x="333" y="318" width="682" height="1" fill="#006e00"/>
<path d="M333 327.5 L718 327.5 L718 327.5 L719 326.5 L720 326.5 L721 326.5 L722 325.5 L723 325.5 L724 324.5 L725 324.5 L726 323.5 L727 322.5 L728 322.5 L729 321.5 L730 320.5 L731 319.5 L732 319.5 L733 318.5 L734 317.5 L735 316.5 L736 316.5 L737 315.5 L738 314.5 L739 314.5 L740 313.5 L741 312.5 L742 312.5 L743 311.5 L744 311.5 L745 310.5 L746 310.5 L747 310.5 L748 309.5 L749 309.5 L750 309.5 L751 309.5 L752 309.5 L753 309.5 L754 309.5 L755 309.5 L756 309.5 L757 309.5 L758 309.5 L759 310.5 L760 310.5 L761 310.5 L762 311.5 L763 311.5 L764 312.5 L765 313.5 L766 313.5 L767 314.5 L768 315.5 L769 315.5 L770 316.5 L771 317.5 L772 317.5 L773 318.5 L774 319.5 L775 320.5 L776 320.5 L777 321.5 L778 322.5 L779 322.5 L780 323.5 L781 324.5 L782 324.5 L783 325.5 L784 325.5 L785 326.5 L786 326.5 L787 327.5 L788 327.5 L789 327.5 L790 327.5 L791 327.5 L792 327.5 L793 327.5 L794 327.5 L795 327.5 L796 327.5 L797 327.5 L798 327.5 L799 326.5 L800 326.5 L801 325.5 L802 325.5 L803 324.5 L804 324.5 L805 323.5 L806 323.5 L807 322.5 L808 321.5 L809 321.5 L810 320.5 L811 319.5 L812 318.5 L813 318.5 L814 317.5 L815 316.5 L816 315.5 L817 315.5 L818 314.5 L819 313.5 L820 313.5 L821 312.5 L822 312.5 L823 311.5 L824 311.5 L825 310.5 L826 310.5 L827 309.5 L828 309.5 L829 309.5 L830 309.5 L831 309.5 L832 309.5 L833 309.5 L834 309.5 L835 309.5 L836 309.5 L837 309.5 L838 309.5 L839 310.5 L840 310.5 L841 311.5 L842 311.5 L843 312.5 L844 312.5 L845 313.5 L846 313.5 L847 314.5 L848 315.5 L849 316.5 L850 316.5 L851 317.5 L852 318.5 L853 318.5 L854 319.5 L855 320.5 L856 321.5 L857 321.5 L858 322.5 L859 323.5 L860 323.5 L861 324.5 L862 325.5 L863 325.5 L864 326.5 L865 326.5 L866 326.5 L867 327.5 L868 327.5 L869 327.5 L870 327.5 L871 327.5 L872 327.5 L873 327.5 L874 327.5 L875 327.5 L876 327.5 L877 327.5 L878 326.5 L879 326.5 L880 326.5 L881 325.5 L882 325.5 L883 324.5 L884 324.5 L885 323.5 L886 322.5 L887 322.5 L888 321.5 L889 320.5 L890 320.5 L891 319.5 L892 318.5 L893 317.5 L894 317.5 L895 316.5 L896 315.5 L897 314.5 L898 314.5 L899 313.5 L900 313.5 L901 312.5 L902 311.5 L903 311.5 L904 310.5 L905 310.5 L906 310.5 L907 309.5 L908 309.5 L909 309.5 L910 309.5 L911 309.5 L912 309.5 L913 309.5 L914 309.5 L915 309.5 L916 309.5 L917 309.5 L918 310.5 L919 310.5 L920 310.5 L921 311.5 L922 311.5 L923 312.5 L924 312.5 L925 313.5 L926 314.5 L927 314.5 L928 315.5 L929 316.5 L930 317.5 L931 317.5 L932 318.5 L933 319.5 L934 319.5 L935 320.5 L936 321.5 L937 322.5 L938 322.5 L939 323.5 L940 324.5 L941 324.5 L942 325.5 L943 325.5 L944 326.5 L945 326.5 L946 326.5 L947 327.5 L948 327.5 L949 327.5 L950 327.5 L951 327.5 L952 327.5 L953 327.5 L954 327.5 L955 327.5 L956 327.5 L957 327.5 L958 326.5 L959 326.5 L960 326.5 L961 325.5 L962 325.5 L963 324.5 L964 323.5 L965 323.5 L966 322.5 L967 322.5 L968 321.5 L969 320.5 L970 319.5 L971 319.5 L972 318.5 L973 317.5 L974 316.5 L975 316.5 L976 315.5 L977 314.5 L978 314.5 L979 313.5 L980 312.5 L981 312.5 L982 311.5 L983 311.5 L984 310.5 L985 310.5 L986 309.5 L987 309.5 L988 309.5 L989 309.5 L990 309.5 L991 309.5 L992 309.5 L993 309.5 L994 309.5 L995 309.5 L996 309.5 L997 309.5 L998 310.5 L999 310.5 L1000 310.5 L1001 311.5 L1002 311.5 L1003 312.5 L1004 313.5 L1005 313.5 L1006 314.5 L1007 315.5 L1008 315.5 L1009 316.5 L1010 317.5 L1011 318.5 L1012 318.5 L1013 319.5 L1014 320.5 L1015 320.5" fill="none" stroke="#00ff00" stroke-width="1"/>
<path d="M333.5 343.5 L337.5 334.5 L704.5 334.5 L708.5 343.5 L704.5 353.5 L337.5 353.5 L333.5 343.5" fill="none" stroke="#00ff00" stroke-width="1"/><path d="M708.5 343.5 L712.5 334.5 L1025.5 334.5 M1025.5 353.5 L712.5 353.5 L708.5 343.5" fill="none" stroke="#00ff00" stroke-width="1"/>
<rect x="333" y="334" width="1" height="20" fill="#00ff00"/>
<path d="M333.5 688.5 L337.5 679.5 L1025.5 679.5 M1025.5 698.5 L337.5 698.5 L333.5 688.5" fill="none" stroke="#00ff00" stroke-width="1"/>
<rect x="710" y="461" width="305" height="17" fill="rgba(0,255,0,0.3)"/>
<rect x="333" y="478" width="376" height="1" fill="#00ff00"/>
<rect x="709" y="460" width="1" height="18" fill="#00b800"/>
<rect x="709" y="460" width="306" height="1" fill="#00b800"/>
<rect x="708" y="459" width="1" height="20" fill="#00ff00"/>
<rect x="708" y="459" width="307" height="1" fill="#00ff00"/>
<rect x="709" y="478" width="306" height="1" fill="#009a00"/>
<rect x="333" y="503" width="682" height="1" fill="#00ff00"/>
<rect x="608" y="484" width="2" height="19" fill="#00ff00"/>
<rect x="610" y="511" width="97" height="17" fill="rgba(0,255,0,0.3)"/>
<rect x="333" y="528" width="276" height="1" fill="#00ff00"/>
<rect x="609" y="510" width="1" height="18" fill="#00b800"/>
<rect x="609" y="510" width="99" height="1" fill="#00b800"/>
<rect x="707" y="510" width="1" height="18" fill="#00b800"/>
<rect x="608" y="509" width="1" height="20" fill="#00ff00"/>
<rect x="608" y="509" width="101" height="1" fill="#00ff00"/>
<rect x="708" y="509" width="1" height="20" fill="#00ff00"/>
<rect x="708" y="528" width="307" height="1" fill="#00ff00"/>
<rect x="609" y="528" width="99" height="1" fill="#009a00"/>
<rect x="335" y="656" width="680" height="17" fill="rgba(0,255,0,0.3)"/>
<rect x="335" y="655" width="680" height="1" fill="#00b800"/>
<rect x="335" y="655" width="1" height="18" fill="#00b800"/>
<rect x="333" y="654" width="682" height="1" fill="#00ff00"/>
<rect x="333" y="654" width="2" height="20" fill="#00ff00"/>
<rect x="335" y="673" width="680" height="1" fill="#009a00"/>
<rect x="333" y="647" width="682" height="1" fill="#00ff00"/>
<rect x="614" y="603" width="1" height="44" fill="#00ff00"/><rect x="620" y="567" width="1" height="80" fill="#00ff00"/><rect x="627" y="622" width="1" height="25" fill="#00ff00"/><rect x="689" y="621" width="1" height="26" fill="#00ff00"/><rect x="695" y="567" width="1" height="80" fill="#00ff00"/><rect x="701" y="603" width="2" height="44" fill="#00ff00"/>
<rect x="608" y="646" width="1" height="1" fill="#00ff00"/><rect x="609" y="646" width="1" height="1" fill="#00ff00"/><rect x="610" y="646" width="1" height="1" fill="#00ff00"/><rect x="611" y="645" width="1" height="2" fill="#00ff00"/><rect x="612" y="646" width="1" height="1" fill="#00ff00"/><rect x="613" y="645" width="1" height="2" fill="#00ff00"/><rect x="614" y="645" width="1" height="2" fill="#00ff00"/><rect x="615" y="645" width="1" height="2" fill="#00ff00"/><rect x="616" y="645" width="1" height="2" fill="#00ff00"/><rect x="617" y="644" width="1" height="3" fill="#00ff00"/><rect x="618" y="644" width="1" height="3" fill="#00ff00"/><rect x="619" y="644" width="1" height="3" fill="#00ff00"/><rect x="620" y="643" width="1" height="4" fill="#00ff00"/><rect x="621" y="644" width="1" height="3" fill="#00ff00"/><rect x="622" y="645" width="1" height="2" fill="#00ff00"/><rect x="623" y="644" width="1" height="3" fill="#00ff00"/><rect x="624" y="644" width="1" height="3" fill="#00ff00"/><rect x="625" y="644" width="1" height="3" fill="#00ff00"/><rect x="626" y="644" width="1" height="3" fill="#00ff00"/><rect x="627" y="645" width="1" height="2" fill="#00ff00"/><rect x="628" y="645" width="1" height="2" fill="#00ff00"/><rect x="629" y="645" width="1" height="2" fill="#00ff00"/><rect x="630" y="645" width="1" height="2" fill="#00ff00"/><rect x="631" y="646" width="1" height="1" fill="#00ff00"/><rect x="632" y="645" width="1" height="2" fill="#00ff00"/><rect x="633" y="645" width="1" height="2" fill="#00ff00"/><rect x="634" y="646" width="1" height="1" fill="#00ff00"/>
<rect x="683" y="646" width="1" height="1" fill="#00ff00"/><rect x="684" y="646" width="1" height="1" fill="#00ff00"/><rect x="685" y="646" width="1" height="1" fill="#00ff00"/><rect x="686" y="645" width="1" height="2" fill="#00ff00"/><rect x="687" y="645" width="1" height="2" fill="#00ff00"/><rect x="688" y="645" width="1" height="2" fill="#00ff00"/><rect x="689" y="645" width="1" height="2" fill="#00ff00"/><rect x="690" y="645" width="1" height="2" fill="#00ff00"/><rect x="691" y="645" width="1" height="2" fill="#00ff00"/><rect x="692" y="644" width="1" height="3" fill="#00ff00"/><rect x="693" y="644" width="1" height="3" fill="#00ff00"/><rect x="694" y="644" width="1" height="3" fill="#00ff00"/><rect x="695" y="644" width="1" height="3" fill="#00ff00"/><rect x="696" y="644" width="1" height="3" fill="#00ff00"/><rect x="697" y="644" width="1" height="3" fill="#00ff00"/><rect x="698" y="644" width="1" height="3" fill="#00ff00"/><rect x="699" y="644" width="1" height="3" fill="#00ff00"/><rect x="700" y="644" width="1" height="3" fill="#00ff00"/><rect x="701" y="644" width="1" height="3" fill="#00ff00"/><rect x="702" y="645" width="1" height="2" fill="#00ff00"/><rect x="703" y="645" width="1" height="2" fill="#00ff00"/><rect x="704" y="645" width="1" height="2" fill="#00ff00"/><rect x="705" y="645" width="1" height="2" fill="#00ff00"/><rect x="706" y="645" width="1" height="2" fill="#00ff00"/><rect x="707" y="645" width="1" height="2" fill="#00ff00"/><rect x="708" y="646" width="1" height="1" fill="#00ff00"/></svg>
<div class="hdr" style="left:0;width:142px;"><span style="position:absolute;left:12px">Name</span></div>
<div class="hdr" style="left:147px;width:179px;border-right:1px solid #9a9a9a"><span style="position:absolute;left:14px">Value</span></div>
<div class="div" style="left:141px;width:6px;background:linear-gradient(90deg,#9a9a9a 0,#fff 1px,#fff 5px,#9a9a9a 6px)"></div>
<div class="div" style="left:326px;width:4px;top:0"></div>
<svg class="ic" style="left:19px;top:60px" width="14" height="13" viewBox="0 0 14 13"><path d="M1.5 1.5 H4.5 V10.5 H8.5 V1.5 H10.5 V10.5 H12.5" fill="none" stroke="#2fa744" stroke-width="1.1"/><circle cx="8.7" cy="9.3" r="3.2" fill="#f39a1d"/><circle cx="8.7" cy="9.3" r="1.1" fill="#fff"/></svg>
<div class="row" style="top:60px;line-height:14px;color:#fff"><span class="nm">i_dat</span><span class="val">1</span></div>
<svg class="ic" style="left:19px;top:85px" width="14" height="13" viewBox="0 0 14 13"><path d="M1.5 1.5 H4.5 V10.5 H8.5 V1.5 H10.5 V10.5 H12.5" fill="none" stroke="#2fa744" stroke-width="1.1"/><circle cx="8.7" cy="9.3" r="3.2" fill="#c8c8c8"/><circle cx="8.7" cy="9.3" r="1.1" fill="#333"/></svg>
<div class="row" style="top:85px;line-height:14px;color:#fff"><span class="nm">o_Idiff</span><span class="val">0</span></div>
<svg class="ic" style="left:19px;top:110px" width="14" height="13" viewBox="0 0 14 13"><path d="M1.5 1.5 H4.5 V10.5 H8.5 V1.5 H10.5 V10.5 H12.5" fill="none" stroke="#2fa744" stroke-width="1.1"/><circle cx="8.7" cy="9.3" r="3.2" fill="#c8c8c8"/><circle cx="8.7" cy="9.3" r="1.1" fill="#333"/></svg>
<div class="row" style="top:110px;line-height:14px;color:#fff"><span class="nm">o_Qdiff</span><span class="val">1</span></div>
<svg class="ic" style="left:6px;top:150px" width="8" height="11" viewBox="0 0 8 11"><path d="M1.5 1 L6.5 5.5 L1.5 10" fill="none" stroke="#9a9a9a" stroke-width="1.3"/></svg>
<svg class="ic" style="left:19px;top:150px" width="14" height="11" viewBox="0 0 14 11"><path d="M1 0.5 H5 L7 3.5 L9 0.5 H13 V7.5 H1 Z" fill="#93bfd9"/><circle cx="7" cy="7" r="2.1" fill="none" stroke="#c8c8c8" stroke-width="2"/></svg>
<div class="row" style="top:148px;line-height:14px;color:#fff"><span class="nm">o_Ifir_T[15:0]</span><span class="val">162</span></div>
<svg class="ic" style="left:6px;top:200px" width="8" height="11" viewBox="0 0 8 11"><path d="M1.5 1 L6.5 5.5 L1.5 10" fill="none" stroke="#9a9a9a" stroke-width="1.3"/></svg>
<svg class="ic" style="left:19px;top:200px" width="14" height="11" viewBox="0 0 14 11"><path d="M1 0.5 H5 L7 3.5 L9 0.5 H13 V7.5 H1 Z" fill="#93bfd9"/><circle cx="7" cy="7" r="2.1" fill="none" stroke="#c8c8c8" stroke-width="2"/></svg>
<div class="row" style="top:198px;line-height:14px;color:#fff"><span class="nm">o_Qfir_T[15:0]</span><span class="val">2546</span></div>
<svg class="ic" style="left:6px;top:237px" width="8" height="11" viewBox="0 0 8 11"><path d="M1.5 1 L6.5 5.5 L1.5 10" fill="none" stroke="#9a9a9a" stroke-width="1.3"/></svg>
<svg class="ic" style="left:19px;top:237px" width="14" height="11" viewBox="0 0 14 11"><path d="M1 0.5 H5 L7 3.5 L9 0.5 H13 V7.5 H1 Z" fill="#93bfd9"/><circle cx="7" cy="7" r="2.1" fill="none" stroke="#c8c8c8" stroke-width="2"/></svg>
<div class="row" style="top:235px;line-height:14px;color:#fff"><span class="nm">mcos0[9:0]</span><span class="val">-332</span></div>
<svg class="ic" style="left:6px;top:262px" width="8" height="11" viewBox="0 0 8 11"><path d="M1.5 1 L6.5 5.5 L1.5 10" fill="none" stroke="#9a9a9a" stroke-width="1.3"/></svg>
<svg class="ic" style="left:19px;top:262px" width="14" height="11" viewBox="0 0 14 11"><path d="M1 0.5 H5 L7 3.5 L9 0.5 H13 V7.5 H1 Z" fill="#93bfd9"/><circle cx="7" cy="7" r="2.1" fill="none" stroke="#c8c8c8" stroke-width="2"/></svg>
<div class="row" style="top:260px;line-height:14px;color:#fff"><span class="nm">msin0[9:0]</span><span class="val">-376</span></div>
<svg class="ic" style="left:6px;top:287px" width="8" height="11" viewBox="0 0 8 11"><path d="M1.5 1 L6.5 5.5 L1.5 10" fill="none" stroke="#9a9a9a" stroke-width="1.3"/></svg>
<svg class="ic" style="left:19px;top:287px" width="14" height="11" viewBox="0 0 14 11"><path d="M1 0.5 H5 L7 3.5 L9 0.5 H13 V7.5 H1 Z" fill="#93bfd9"/><circle cx="7" cy="7" r="2.1" fill="none" stroke="#c8c8c8" stroke-width="2"/></svg>
<div class="row" style="top:285px;line-height:14px;color:#fff"><span class="nm">o_cos[15:0]</span><span class="val">-22529</span></div>
<div class="abs" style="left:19px;top:305px;width:82px;height:25px;background:#cde0fc"></div>
<div class="abs" style="left:150px;top:305px;width:172px;height:25px;box-sizing:border-box;background:#cde0fc;border:1px solid #3d8be0"></div>
<svg class="ic" style="left:6px;top:312px" width="8" height="11" viewBox="0 0 8 11"><path d="M1.5 1 L6.5 5.5 L1.5 10" fill="none" stroke="#9a9a9a" stroke-width="1.3"/></svg>
<svg class="ic" style="left:19px;top:312px" width="14" height="11" viewBox="0 0 14 11"><path d="M1 0.5 H5 L7 3.5 L9 0.5 H13 V7.5 H1 Z" fill="#93bfd9"/><circle cx="7" cy="7" r="2.1" fill="none" stroke="#c8c8c8" stroke-width="2"/></svg>
<div class="row" style="top:310px;line-height:14px;color:#1c1c28"><span class="nm">o_sin[15:0]</span><span class="val">-23041</span></div>
<svg class="ic" style="left:6px;top:337px" width="8" height="11" viewBox="0 0 8 11"><path d="M1.5 1 L6.5 5.5 L1.5 10" fill="none" stroke="#9a9a9a" stroke-width="1.3"/></svg>
<svg class="ic" style="left:19px;top:337px" width="14" height="11" viewBox="0 0 14 11"><path d="M1 0.5 H5 L7 3.5 L9 0.5 H13 V7.5 H1 Z" fill="#93bfd9"/><circle cx="7" cy="7" r="2.1" fill="none" stroke="#c8c8c8" stroke-width="2"/></svg>
<div class="row" style="top:335px;line-height:14px;color:#fff"><span class="nm">o_freq[31:0]</span><span class="val">5</span></div>
<svg class="ic" style="left:6px;top:375px" width="8" height="11" viewBox="0 0 8 11"><path d="M1.5 1 L6.5 5.5 L1.5 10" fill="none" stroke="#9a9a9a" stroke-width="1.3"/></svg>
<svg class="ic" style="left:19px;top:375px" width="14" height="11" viewBox="0 0 14 11"><path d="M1 0.5 H5 L7 3.5 L9 0.5 H13 V7.5 H1 Z" fill="#93bfd9"/><circle cx="7" cy="7" r="2.1" fill="none" stroke="#c8c8c8" stroke-width="2"/></svg>
<div class="row" style="top:373px;line-height:14px;color:#fff"><span class="nm">o_Ifir[15:0]</span><span class="val">-14580</span></div>
<svg class="ic" style="left:6px;top:425px" width="8" height="11" viewBox="0 0 8 11"><path d="M1.5 1 L6.5 5.5 L1.5 10" fill="none" stroke="#9a9a9a" stroke-width="1.3"/></svg>
<svg class="ic" style="left:19px;top:425px" width="14" height="11" viewBox="0 0 14 11"><path d="M1 0.5 H5 L7 3.5 L9 0.5 H13 V7.5 H1 Z" fill="#93bfd9"/><circle cx="7" cy="7" r="2.1" fill="none" stroke="#c8c8c8" stroke-width="2"/></svg>
<div class="row" style="top:423px;line-height:14px;color:#fff"><span class="nm">o_Qfir[15:0]</span><span class="val">-17995</span></div>
<svg class="ic" style="left:19px;top:460px" width="14" height="13" viewBox="0 0 14 13"><path d="M1.5 1.5 H4.5 V10.5 H8.5 V1.5 H10.5 V10.5 H12.5" fill="none" stroke="#2fa744" stroke-width="1.1"/><circle cx="8.7" cy="9.3" r="3.2" fill="#c8c8c8"/><circle cx="8.7" cy="9.3" r="1.1" fill="#333"/></svg>
<div class="row" style="top:460px;line-height:14px;color:#fff"><span class="nm">o_ends</span><span class="val">1</span></div>
<svg class="ic" style="left:19px;top:485px" width="14" height="13" viewBox="0 0 14 13"><path d="M1.5 1.5 H4.5 V10.5 H8.5 V1.5 H10.5 V10.5 H12.5" fill="none" stroke="#2fa744" stroke-width="1.1"/><circle cx="8.7" cy="9.3" r="3.2" fill="#c8c8c8"/><circle cx="8.7" cy="9.3" r="1.1" fill="#333"/></svg>
<div class="row" style="top:485px;line-height:14px;color:#fff"><span class="nm">o_start</span><span class="val">0</span></div>
<svg class="ic" style="left:19px;top:510px" width="14" height="13" viewBox="0 0 14 13"><path d="M1.5 1.5 H4.5 V10.5 H8.5 V1.5 H10.5 V10.5 H12.5" fill="none" stroke="#2fa744" stroke-width="1.1"/><circle cx="8.7" cy="9.3" r="3.2" fill="#c8c8c8"/><circle cx="8.7" cy="9.3" r="1.1" fill="#333"/></svg>
<div class="row" style="top:510px;line-height:14px;color:#fff"><span class="nm">o_enable</span><span class="val">0</span></div>
<svg class="ic" style="left:6px;top:585px" width="8" height="11" viewBox="0 0 8 11"><path d="M1.5 1 L6.5 5.5 L1.5 10" fill="none" stroke="#9a9a9a" stroke-width="1.3"/></svg>
<svg class="ic" style="left:19px;top:585px" width="14" height="11" viewBox="0 0 14 11"><path d="M1 0.5 H5 L7 3.5 L9 0.5 H13 V7.5 H1 Z" fill="#93bfd9"/><circle cx="7" cy="7" r="2.1" fill="none" stroke="#c8c8c8" stroke-width="2"/></svg>
<div class="row" style="top:583px;line-height:14px;color:#fff"><span class="nm">absy[31:0]</span><span class="val">3281</span></div>
<svg class="ic" style="left:19px;top:655px" width="14" height="13" viewBox="0 0 14 13"><path d="M1.5 1.5 H4.5 V10.5 H8.5 V1.5 H10.5 V10.5 H12.5" fill="none" stroke="#2fa744" stroke-width="1.1"/><circle cx="8.7" cy="9.3" r="3.2" fill="#f39a1d"/><circle cx="8.7" cy="9.3" r="1.1" fill="#fff"/></svg>
<div class="row" style="top:655px;line-height:14px;color:#fff"><span class="nm">writeen</span><span class="val">1</span></div>
<svg class="ic" style="left:6px;top:682px" width="8" height="11" viewBox="0 0 8 11"><path d="M1.5 1 L6.5 5.5 L1.5 10" fill="none" stroke="#9a9a9a" stroke-width="1.3"/></svg>
<svg class="ic" style="left:19px;top:682px" width="14" height="11" viewBox="0 0 14 11"><path d="M1 0.5 H5 L7 3.5 L9 0.5 H13 V7.5 H1 Z" fill="#93bfd9"/><circle cx="7" cy="7" r="3.1" fill="#f39a1d"/><circle cx="7" cy="7" r="1" fill="#fff"/></svg>
<div class="row" style="top:680px;line-height:14px;color:#fff"><span class="nm">fout1[31:0]</span><span class="val">ffffb1e0</span></div>
<div class="mono" style="left:335px;top:31px">0.000000 us</div>
<div class="mono" style="left:456px;top:31px">200.000000 us</div>
<div class="mono" style="left:578px;top:31px">400.000000 us</div>
<div class="mono" style="left:699px;top:31px">600.000000 us</div>
<div class="mono" style="left:821px;top:31px">800.000000 us</div>
<div class="mono" style="left:942px;top:31px">1,000.000000 us</div>
<div class="abs" style="left:927px;top:-1px;width:100px;height:16px;background:#ffff00;border:1px solid #fff;box-sizing:border-box"></div>
<div class="mono" style="left:930px;top:-1px;color:#000">1,133.370000 us</div>
<div class="mono" style="left:517px;top:335px">0</div>
<div class="mono" style="left:870px;top:335px">5</div>
<div class="mono" style="left:663px;top:681px;letter-spacing:1.3px">ffffb1e0</div>
<div class="red" style="left:147px;top:169px">带频偏的QPSK基带信号</div>
<div class="red" style="left:110px;top:398px">频偏补偿后的QPSK基带信号</div>
<div class="red" style="left:424px;top:371px;letter-spacing:0.25px">频偏估计阶段</div>
<div class="red" style="left:804px;top:371px;letter-spacing:0.25px">频偏锁定阶段</div>
<div class="red" style="left:636px;top:560px;letter-spacing:-0.2px">FFT频谱估计</div>
<div class="abs" style="left:840px;top:664px;font-size:18px;line-height:24px;color:rgba(255,255,255,0.78);white-space:nowrap">CSDN @我爱C编程</div>
</body></html>
